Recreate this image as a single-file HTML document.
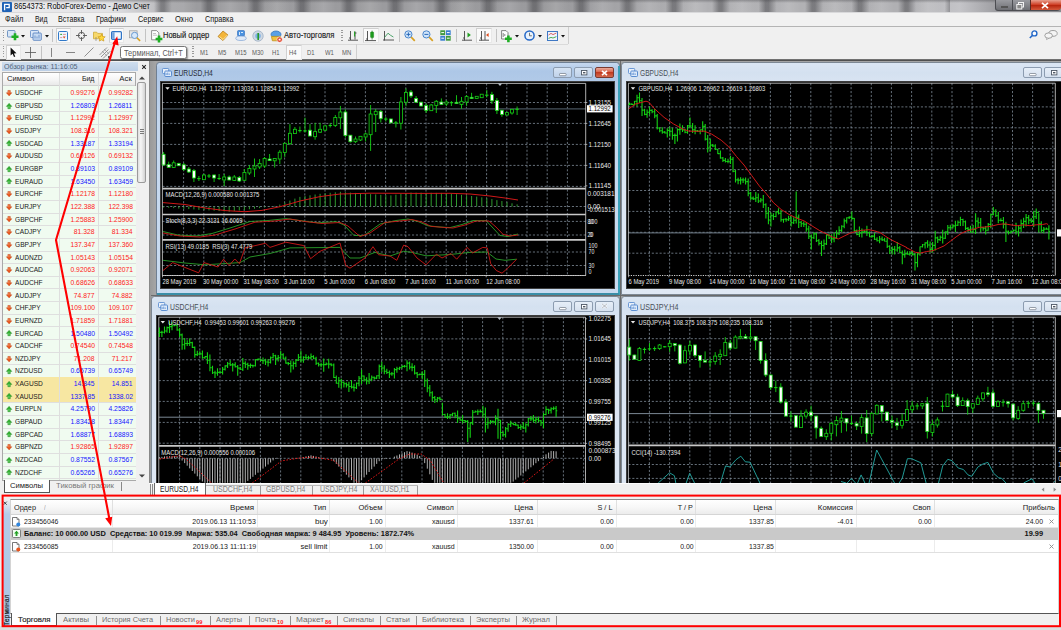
<!DOCTYPE html>
<html lang="ru"><head><meta charset="utf-8"><title>8654373: RoboForex-Demo - Демо Счет</title>
<style>
html,body{margin:0;padding:0;background:#f0f0f0;}
body{width:1061px;height:630px;overflow:hidden;position:relative;font-family:"Liberation Sans",sans-serif;}
#app{position:absolute;left:0;top:0;width:1061px;height:630px;overflow:hidden;}
#app div,.a{position:absolute;}
.t{position:absolute;white-space:pre;display:block;}
svg{overflow:visible;display:block;}
svg text{font-family:"Liberation Sans",sans-serif;}
</style></head>
<body><div id="app">
<div style="left:0.00px;top:0.00px;width:1061.00px;height:13.00px;background:linear-gradient(90deg,#ececee 0,#e2e2e5 110px,#c4c4c7 150px,#9c9c9f 185px,#9a9a9d 560px,#b2b2b5 700px,#b0b0b3 900px,#c4c4c8 960px,#9a9a9e 1000px,#8a8a8e 1061px);"></div>
<div style="left:150.00px;top:0.00px;width:800.00px;height:12.40px;background-image:repeating-linear-gradient(90deg,rgba(70,70,74,0) 0,rgba(70,70,74,0) 4px,rgba(70,70,74,.5) 11px,rgba(70,70,74,.5) 14px,rgba(70,70,74,0) 22px,rgba(255,255,255,.12) 34px,rgba(70,70,74,0) 46.5px);"></div>
<div style="left:0.00px;top:0.00px;width:1061.00px;height:3.00px;background:linear-gradient(rgba(60,60,64,.35),rgba(60,60,64,0));"></div>
<div style="left:0.00px;top:12.20px;width:1061.00px;height:1.00px;background:#d9d9db;"></div>
<svg class="a" style="left:2px;top:1.5px" width="10" height="10" viewBox="0 0 10 10"><rect width="10" height="10" rx="1" fill="#1f62b6"/><path d="M2.6 8.2V2.4h4.6v3.2H4.2" fill="none" stroke="#fff" stroke-width="1.3"/></svg>
<span class="t" style="top:1.10px;font-size:8.6px;line-height:10.6px;color:#0a0a0a;left:13.80px;transform:scaleX(0.866);transform-origin:0 0;">8654373: RoboForex-Demo - Демо Счет</span>
<div style="left:995.00px;top:0.00px;width:65.00px;height:10.50px;background:linear-gradient(#9a9ba0,#6e6f74);border:1px solid #4c4d52;border-top:none;border-radius:0 0 3px 3px;box-sizing:border-box;"></div>
<div style="left:1030.00px;top:0.00px;width:29.50px;height:10.00px;background:linear-gradient(#e8a08f,#d0432a 45%,#b8270f 55%,#d4593c);border-left:1px solid #5a2a22;border-radius:0 0 3px 0;"></div>
<div style="left:1012.00px;top:0.00px;width:1.00px;height:10.00px;background:#4c4d52;"></div>
<div style="left:1000.50px;top:5.60px;width:7.00px;height:2.20px;background:#fff;border:.5px solid #555;box-sizing:border-box;"></div>
<svg class="a" style="left:1016px;top:1.5px" width="9" height="8" viewBox="0 0 9 8"><rect x="2.5" y=".5" width="5" height="4.5" fill="none" stroke="#f2f2f2" stroke-width="1"/><rect x=".8" y="2.5" width="5" height="4.5" fill="#888" stroke="#f2f2f2" stroke-width="1"/></svg>
<svg class="a" style="left:1041px;top:1.5px" width="8" height="7" viewBox="0 0 8 7"><path d="M1 .8l6 5.4M7 .8L1 6.2" stroke="#fff" stroke-width="1.7"/></svg>
<div style="left:0.00px;top:13.20px;width:1061.00px;height:13.00px;background:#f1f1f1;"></div>
<div style="left:0.00px;top:26.20px;width:1061.00px;height:0.90px;background:#b4b4b4;"></div>
<span class="t" style="top:14.40px;font-size:8.6px;line-height:10.6px;color:#141414;left:4.50px;transform:scaleX(0.875);transform-origin:0 0;">Файл</span>
<span class="t" style="top:14.40px;font-size:8.6px;line-height:10.6px;color:#141414;left:34.50px;transform:scaleX(0.803);transform-origin:0 0;">Вид</span>
<span class="t" style="top:14.40px;font-size:8.6px;line-height:10.6px;color:#141414;left:58.00px;transform:scaleX(0.829);transform-origin:0 0;">Вставка</span>
<span class="t" style="top:14.40px;font-size:8.6px;line-height:10.6px;color:#141414;left:96.00px;transform:scaleX(0.878);transform-origin:0 0;">Графики</span>
<span class="t" style="top:14.40px;font-size:8.6px;line-height:10.6px;color:#141414;left:137.50px;transform:scaleX(0.866);transform-origin:0 0;">Сервис</span>
<span class="t" style="top:14.40px;font-size:8.6px;line-height:10.6px;color:#141414;left:174.50px;transform:scaleX(0.901);transform-origin:0 0;">Окно</span>
<span class="t" style="top:14.40px;font-size:8.6px;line-height:10.6px;color:#141414;left:204.50px;transform:scaleX(0.845);transform-origin:0 0;">Справка</span>
<div style="left:0.00px;top:27.00px;width:1061.00px;height:33.00px;background:#f0f0f0;"></div>
<div style="left:0.00px;top:43.60px;width:568.00px;height:0.80px;background:#dadada;"></div>
<div style="left:567.50px;top:27.00px;width:1.00px;height:16.50px;background:#cfcfcf;"></div>
<div style="left:356.00px;top:44.40px;width:1.00px;height:15.50px;background:#cfcfcf;"></div>
<div style="left:0.00px;top:59.40px;width:1061.00px;height:2.30px;background:linear-gradient(#8a8a8a,#4e4e4e 40%,#5a5a5a);"></div>
<div style="left:2.60px;top:29.50px;width:1.60px;height:12.00px;background-image:repeating-linear-gradient(#9a9a9a 0 1px,transparent 1px 2.4px);"></div>
<svg class="a" style="left:7px;top:30px" width="12" height="11" viewBox="0 0 12 11"><rect x=".5" y=".5" width="7.5" height="6.5" rx=".8" fill="#d8e6f6" stroke="#5580b8" stroke-width=".8"/><path d="M8 3.2v7M4.5 6.7h7" stroke="#1fae24" stroke-width="2.6"/></svg>
<svg class="a" style="left:21px;top:35px" width="4" height="3" viewBox="0 0 4 3"><path d="M0 0h4L2 2.6z" fill="#111"/></svg>
<svg class="a" style="left:30px;top:30px" width="12" height="11" viewBox="0 0 12 11"><rect x=".5" y=".5" width="8" height="7" rx=".8" fill="#dbe8f8" stroke="#5b86c4" stroke-width=".8"/><rect x="3" y="3" width="8.3" height="7.3" rx=".8" fill="#c7dbf3" stroke="#4b78ba" stroke-width=".8"/><path d="M5 8.5V5.5M7 8.5V6.5M9 8.5V4.8" stroke="#4b78ba" stroke-width=".7"/></svg>
<svg class="a" style="left:44.5px;top:35px" width="4" height="3" viewBox="0 0 4 3"><path d="M0 0h4L2 2.6z" fill="#111"/></svg>
<div style="left:52.00px;top:29.00px;width:1.00px;height:13.00px;background:#c3c3c3;"></div>
<div style="left:55.50px;top:28.00px;width:15.00px;height:15.00px;background:#fafafa;border:1px solid #d0d0d0;border-right-color:#e8e8e8;border-bottom-color:#e8e8e8;box-sizing:border-box;"></div>
<svg class="a" style="left:58px;top:30.5px" width="10" height="10" viewBox="0 0 10 10"><rect x=".5" y=".5" width="9" height="9" rx="1" fill="#eef5ff" stroke="#2f78c8" stroke-width="1"/><path d="M3 2.4l1.4 1.6H2z" fill="#22a022"/><path d="M6.2 7.6L4.8 5.6h2.8z" fill="#e04a1a"/><path d="M5 3.4h2.8M2.2 6.6h2" stroke="#c55" stroke-width=".6"/></svg>
<svg class="a" style="left:76px;top:30px" width="11" height="11" viewBox="0 0 11 11"><circle cx="5.5" cy="5.5" r="3.2" fill="none" stroke="#555" stroke-width=".9"/><path d="M5.5 0v4M5.5 7v4M0 5.5h4M7 5.5h4" stroke="#555" stroke-width=".9"/></svg>
<svg class="a" style="left:93px;top:29.5px" width="13" height="12" viewBox="0 0 13 12"><path d="M.5 2.2h3.2l1 1.2h4.8v5.4h-9z" fill="#f7d86a" stroke="#c9a227" stroke-width=".7"/><path d="M8.6 4.2l1.1 2.3 2.5.3-1.8 1.8.5 2.5-2.3-1.2-2.3 1.2.5-2.5-1.8-1.8 2.5-.3z" fill="#ffd83a" stroke="#c48f12" stroke-width=".6"/><path d="M3 7v4" stroke="#777" stroke-width=".6"/></svg>
<div style="left:108.50px;top:28.00px;width:15.50px;height:15.00px;background:#fafafa;border:1px solid #d0d0d0;border-right-color:#e8e8e8;border-bottom-color:#e8e8e8;box-sizing:border-box;"></div>
<svg class="a" style="left:111px;top:31px" width="11" height="9" viewBox="0 0 11 9"><rect x=".6" y=".6" width="9.8" height="7.8" rx="1" fill="#f4f8fe" stroke="#2e74c6" stroke-width="1.2"/><rect x="1.2" y="1.2" width="2.4" height="6.6" fill="#6fa0dc"/></svg>
<svg class="a" style="left:129px;top:30px" width="12" height="12" viewBox="0 0 12 12"><rect x=".5" y=".8" width="7.6" height="7" fill="#e8e8e8" stroke="#9a9a9a" stroke-width=".7"/><circle cx="5.6" cy="5.4" r="3.1" fill="#d6e8fb" stroke="#6a9ad0" stroke-width="1"/><path d="M7.9 7.7l3.2 3.2" stroke="#d8a020" stroke-width="1.6"/></svg>
<div style="left:145.00px;top:29.00px;width:1.00px;height:13.00px;background:#c3c3c3;"></div>
<svg class="a" style="left:151px;top:29.5px" width="12" height="13" viewBox="0 0 12 13"><path d="M.6 .6h5l2.2 2.2v7h-7.2z" fill="#fff" stroke="#777" stroke-width=".8"/><path d="M2 3.5h3M2 5.2h4" stroke="#999" stroke-width=".6"/><path d="M8 5.6v6.8M4.6 9h6.8" stroke="#1fae24" stroke-width="2.6"/></svg>
<span class="t" style="top:30.30px;font-size:8.6px;line-height:10.6px;color:#1a1a1a;-webkit-text-stroke:.14px #1a1a1a;left:163.00px;transform:scaleX(0.875);transform-origin:0 0;">Новый ордер</span>
<svg class="a" style="left:217px;top:30px" width="12" height="11" viewBox="0 0 12 11"><path d="M1 6.5L6 1l5 4-5 5.5z" fill="#f3b53a" stroke="#b07610" stroke-width=".7"/><path d="M2.5 6.5l3.5 3 4.5-4.5" fill="none" stroke="#fff0b0" stroke-width=".8"/></svg>
<svg class="a" style="left:235px;top:30px" width="12" height="11" viewBox="0 0 12 11"><rect x="2.5" y=".5" width="7" height="5.5" rx="1" fill="#4a92e0" stroke="#2a68b8" stroke-width=".6"/><ellipse cx="6" cy="8.3" rx="5.3" ry="2.2" fill="#dfeaf8" stroke="#7fa4d4" stroke-width=".7"/><path d="M4.5 2v3M6 2.5h2" stroke="#fff" stroke-width=".8"/></svg>
<svg class="a" style="left:252px;top:30px" width="12" height="12" viewBox="0 0 12 12"><circle cx="6" cy="6" r="5.2" fill="#cfd8e2" stroke="#9eb0c4" stroke-width=".8"/><circle cx="6" cy="6" r="2.8" fill="#7fb2e6"/><path d="M6.2 3v7" stroke="#2a9a2a" stroke-width="1.6"/></svg>
<svg class="a" style="left:270px;top:29.5px" width="13" height="13" viewBox="0 0 13 13"><ellipse cx="6" cy="4.4" rx="5" ry="3.4" fill="#5aa0e6" stroke="#2b6cb4" stroke-width=".7"/><path d="M1.4 6.4h9.2l-1 4.4H2.4z" fill="#f2c23e" stroke="#b8860f" stroke-width=".7"/><circle cx="9.6" cy="9.6" r="2.7" fill="#e03a1e" stroke="#fff" stroke-width=".6"/><rect x="8.6" y="8.7" width="2" height="1.8" fill="#fff"/></svg>
<span class="t" style="top:30.30px;font-size:8.6px;line-height:10.6px;color:#1a1a1a;-webkit-text-stroke:.14px #1a1a1a;left:283.70px;transform:scaleX(0.889);transform-origin:0 0;">Авто-торговля</span>
<div style="left:341.00px;top:29.50px;width:1.60px;height:12.00px;background-image:repeating-linear-gradient(#9a9a9a 0 1px,transparent 1px 2.4px);"></div>
<svg class="a" style="left:348px;top:30px" width="10" height="11" viewBox="0 0 10 11"><path d="M2.5 1v9M1 8h1.5M7 1.5v8M7 3h1.5M0 10.2h10" stroke="#444" stroke-width=".9" fill="none"/><path d="M6.6 1.5v5" stroke="#22a022" stroke-width="1.1"/></svg>
<div style="left:362.50px;top:28.00px;width:16.00px;height:15.00px;background:#fafafa;border:1px solid #d0d0d0;border-right-color:#e8e8e8;border-bottom-color:#e8e8e8;box-sizing:border-box;"></div>
<svg class="a" style="left:365px;top:29.5px" width="11" height="12" viewBox="0 0 11 12"><path d="M2.5 1v10M1 9h1.5M0 10.6h11" stroke="#444" stroke-width=".9" fill="none"/><rect x="5.6" y="2" width="3" height="5.6" rx=".6" fill="#22b022" stroke="#157a15" stroke-width=".5"/><path d="M7.1 .6v9" stroke="#157a15" stroke-width=".7"/></svg>
<svg class="a" style="left:383px;top:30px" width="11" height="11" viewBox="0 0 11 11"><path d="M1.5 1v9.5M0 10h11" stroke="#444" stroke-width=".9" fill="none"/><path d="M1.5 7.5L5 3.2l2.4 2L10.4 7" stroke="#3a9a5a" stroke-width=".9" fill="none"/></svg>
<div style="left:399.00px;top:29.00px;width:1.00px;height:13.00px;background:#c3c3c3;"></div>
<svg class="a" style="left:404px;top:30px" width="12" height="12" viewBox="0 0 12 12"><circle cx="4.4" cy="4.4" r="3.6" fill="#cfe4fa" stroke="#4a86cc" stroke-width="1"/><path d="M2.4 4.4h4M4.4 2.4v4" stroke="#2a6ab8" stroke-width="1"/><path d="M7.2 7.2l3.6 3.6" stroke="#d8a020" stroke-width="1.7"/></svg>
<svg class="a" style="left:422px;top:30px" width="12" height="12" viewBox="0 0 12 12"><circle cx="4.4" cy="4.4" r="3.6" fill="#cfe4fa" stroke="#4a86cc" stroke-width="1"/><path d="M2.4 4.4h4" stroke="#2a6ab8" stroke-width="1"/><path d="M7.2 7.2l3.6 3.6" stroke="#d8a020" stroke-width="1.7"/></svg>
<svg class="a" style="left:440px;top:30px" width="11" height="11" viewBox="0 0 11 11"><rect x=".3" y=".3" width="4.8" height="4.8" fill="#3f9a3f"/><rect x="5.9" y=".3" width="4.8" height="4.8" fill="#3a7fd0"/><rect x=".3" y="5.9" width="4.8" height="4.8" fill="#3a7fd0"/><rect x="5.9" y="5.9" width="4.8" height="4.8" fill="#3f9a3f"/><path d="M1.3 2.6h2.8M6.9 2.6h2.8M1.3 8.2h2.8M6.9 8.2h2.8" stroke="#fff" stroke-width="1"/></svg>
<div style="left:456.00px;top:29.00px;width:1.00px;height:13.00px;background:#c3c3c3;"></div>
<svg class="a" style="left:462px;top:30px" width="11" height="11" viewBox="0 0 11 11"><path d="M2.5 1v9.5M1 8h1.5M0 10.2h10" stroke="#444" stroke-width=".9" fill="none"/><path d="M5.5 2.6l3.4 2.5-3.4 2.5z" fill="#22a022"/></svg>
<div style="left:476.00px;top:28.00px;width:16.00px;height:15.00px;background:#fafafa;border:1px solid #d0d0d0;border-right-color:#e8e8e8;border-bottom-color:#e8e8e8;box-sizing:border-box;"></div>
<svg class="a" style="left:479px;top:30px" width="11" height="11" viewBox="0 0 11 11"><path d="M2.5 1v9.5M1 8h1.5M0 10.2h10M6 1v9" stroke="#444" stroke-width=".9" fill="none"/><path d="M9.6 3l-2.6 2 2.6 2z" fill="#e04a1a"/></svg>
<div style="left:495.50px;top:29.00px;width:1.00px;height:13.00px;background:#c3c3c3;"></div>
<svg class="a" style="left:501px;top:29.5px" width="12" height="13" viewBox="0 0 12 13"><path d="M.6 .6h4.4l2 2v6.4h-6.4z" fill="#fff" stroke="#666" stroke-width=".8"/><path d="M2.2 3v4M3.8 4v2" stroke="#555" stroke-width=".7"/><path d="M7.4 5.4v6.8M4 8.8h6.8" stroke="#1fae24" stroke-width="2.6"/></svg>
<svg class="a" style="left:514.5px;top:35px" width="4" height="3" viewBox="0 0 4 3"><path d="M0 0h4L2 2.6z" fill="#111"/></svg>
<svg class="a" style="left:523.5px;top:30px" width="11" height="11" viewBox="0 0 11 11"><circle cx="5.5" cy="5.5" r="4.6" fill="#eaf3fd" stroke="#2468c8" stroke-width="1.5"/><path d="M5.5 2.8v3h2.4" stroke="#555" stroke-width=".8" fill="none"/></svg>
<svg class="a" style="left:537.5px;top:35px" width="4" height="3" viewBox="0 0 4 3"><path d="M0 0h4L2 2.6z" fill="#111"/></svg>
<svg class="a" style="left:546.5px;top:30.5px" width="11" height="10" viewBox="0 0 11 10"><rect x=".5" y=".5" width="10" height="9" fill="#eef4fc" stroke="#3f78c4" stroke-width="1"/><path d="M1.5 4l2.5-1.6 2 1.2 3.4-1.6" stroke="#d04040" stroke-width=".8" fill="none"/><path d="M1.5 7.4l2.5-1 2 .6 3.4-1.4" stroke="#2a9a2a" stroke-width=".8" fill="none"/></svg>
<svg class="a" style="left:560.5px;top:35px" width="4" height="3" viewBox="0 0 4 3"><path d="M0 0h4L2 2.6z" fill="#111"/></svg>
<svg class="a" style="left:1029px;top:30px" width="9" height="9" viewBox="0 0 9 9"><circle cx="5.4" cy="3.4" r="2.5" fill="#fff" stroke="#2468c8" stroke-width="1.4"/><path d="M3.6 5.2L.8 8" stroke="#2468c8" stroke-width="1.6"/></svg>
<svg class="a" style="left:1044px;top:30px" width="14" height="10" viewBox="0 0 14 10"><ellipse cx="9" cy="3.4" rx="4.2" ry="2.9" fill="#f4f4f4" stroke="#8a8a8a" stroke-width=".8"/><ellipse cx="4.6" cy="5.6" rx="3.8" ry="2.7" fill="#f4f4f4" stroke="#8a8a8a" stroke-width=".8"/><path d="M3 8l-.5 1.6L5 8.2" fill="#f4f4f4" stroke="#8a8a8a" stroke-width=".6"/></svg>
<div style="left:2.60px;top:46.00px;width:1.60px;height:12.00px;background-image:repeating-linear-gradient(#9a9a9a 0 1px,transparent 1px 2.4px);"></div>
<div style="left:5.50px;top:44.80px;width:15.00px;height:15.00px;background:#fafafa;border:1px solid #d0d0d0;border-right-color:#e8e8e8;border-bottom-color:#e8e8e8;box-sizing:border-box;"></div>
<svg class="a" style="left:9.5px;top:47px" width="7" height="11" viewBox="0 0 7 11"><path d="M.6 .6v8l2-1.8 1.4 3.2 1.3-.6-1.4-3 2.6-.2z" fill="#111"/></svg>
<svg class="a" style="left:25px;top:47px" width="11" height="11" viewBox="0 0 11 11"><path d="M5.5 0v11M0 5.5h11" stroke="#555" stroke-width=".8"/></svg>
<div style="left:40.50px;top:46.00px;width:1.00px;height:13.00px;background:#c3c3c3;"></div>
<div style="left:51.00px;top:48.00px;width:1.00px;height:9.00px;background:#858585;"></div>
<div style="left:66.00px;top:52.30px;width:9.00px;height:1.00px;background:#858585;"></div>
<svg class="a" style="left:84px;top:47px" width="10" height="10" viewBox="0 0 10 10"><path d="M.5 9.5L9.5 .5" stroke="#858585" stroke-width=".9"/></svg>
<svg class="a" style="left:99px;top:46.5px" width="12" height="12" viewBox="0 0 12 12"><path d="M.5 8L8 .5M2 10L9.5 2.5M4 11.5L11.5 4" stroke="#808080" stroke-width=".8"/><path d="M3 4l5 5M5 2l5 5" stroke="#888" stroke-width=".6"/><rect x="9" y="9" width="2.5" height="2.5" fill="#555"/></svg>
<div style="left:119.50px;top:46.00px;width:67.50px;height:13.40px;background:#fff;border:1px solid #767676;border-radius:2.5px;box-sizing:border-box;box-shadow:1px 1px 1.5px rgba(0,0,0,.35);"></div>
<span class="t" style="top:47.50px;font-size:8.4px;line-height:10.4px;color:#5a5a5a;left:124.00px;transform:scaleX(0.888);transform-origin:0 0;">Терминал, Ctrl+T</span>
<div style="left:192.00px;top:46.00px;width:1.60px;height:12.00px;background-image:repeating-linear-gradient(#9a9a9a 0 1px,transparent 1px 2.4px);"></div>
<div style="left:285.50px;top:44.80px;width:16.00px;height:15.00px;background:#fafafa;border:1px solid #d0d0d0;border-right-color:#e8e8e8;border-bottom-color:#e8e8e8;box-sizing:border-box;"></div>
<span class="t" style="top:48.90px;font-size:6.6px;line-height:8.6px;color:#5a5a5a;left:200.00px;transform:scaleX(0.900);transform-origin:0 0;">M1</span>
<span class="t" style="top:48.90px;font-size:6.6px;line-height:8.6px;color:#5a5a5a;left:217.50px;transform:scaleX(0.900);transform-origin:0 0;">M5</span>
<span class="t" style="top:48.90px;font-size:6.6px;line-height:8.6px;color:#5a5a5a;left:234.50px;transform:scaleX(0.900);transform-origin:0 0;">M15</span>
<span class="t" style="top:48.90px;font-size:6.6px;line-height:8.6px;color:#5a5a5a;left:252.00px;transform:scaleX(0.900);transform-origin:0 0;">M30</span>
<span class="t" style="top:48.90px;font-size:6.6px;line-height:8.6px;color:#5a5a5a;left:271.50px;transform:scaleX(0.900);transform-origin:0 0;">H1</span>
<span class="t" style="top:48.90px;font-size:6.6px;line-height:8.6px;color:#5a5a5a;left:289.00px;transform:scaleX(0.900);transform-origin:0 0;">H4</span>
<span class="t" style="top:48.90px;font-size:6.6px;line-height:8.6px;color:#5a5a5a;left:307.00px;transform:scaleX(0.900);transform-origin:0 0;">D1</span>
<span class="t" style="top:48.90px;font-size:6.6px;line-height:8.6px;color:#5a5a5a;left:324.50px;transform:scaleX(0.900);transform-origin:0 0;">W1</span>
<span class="t" style="top:48.90px;font-size:6.6px;line-height:8.6px;color:#5a5a5a;left:341.50px;transform:scaleX(0.900);transform-origin:0 0;">MN</span>
<div style="left:0.00px;top:61.00px;width:149.00px;height:434.00px;background:#f0f0f0;"></div>
<div style="left:2.00px;top:62.00px;width:136.00px;height:9.00px;background:linear-gradient(#cfdeee,#bccfe6);"></div>
<span class="t" style="top:61.60px;font-size:8px;line-height:10px;color:#4e5f78;left:3.50px;transform:scaleX(0.885);transform-origin:0 0;">Обзор рынка: 11:16:05</span>
<svg class="a" style="left:140.5px;top:63.5px" width="6" height="6" viewBox="0 0 6 6"><path d="M1.2 1.2l3.6 3.6M4.8 1.2l-3.6 3.6" stroke="#222" stroke-width="1.05"/></svg>
<div style="left:2.00px;top:72.00px;width:134.00px;height:409.00px;background:#fff;border:1px solid #a9a9a9;box-sizing:border-box;"></div>
<div style="left:3.00px;top:73.00px;width:132.00px;height:12.50px;background:linear-gradient(#fff,#f4f4f4 60%,#e9e9e9);border-bottom:1px solid #d0d0d0;box-sizing:border-box;"></div>
<span class="t" style="top:74.20px;font-size:8px;line-height:10px;color:#1a1a1a;left:6.50px;transform:scaleX(0.953);transform-origin:0 0;">Символ</span>
<span class="t" style="top:74.20px;font-size:8px;line-height:10px;color:#1a1a1a;left:79.61px;width:14.39px;transform:scaleX(0.869);transform-origin:100% 0;">Бид</span>
<span class="t" style="top:74.20px;font-size:8px;line-height:10px;color:#1a1a1a;left:119.46px;width:12.84px;transform:scaleX(0.974);transform-origin:100% 0;">Аск</span>
<div style="left:3.00px;top:85.50px;width:132.50px;height:394.50px;background:#f0fbf0;"></div>
<div style="left:3.00px;top:98.70px;width:132.50px;height:1.00px;background:#dfdfdf;"></div>
<svg class="a" style="left:5.6px;top:89.87500000000001px" width="6.2" height="6.2" viewBox="0 0 8 8"><path d="M2.4 0.6h3.2v3h2L4 7.6 0.4 3.6h2z" fill="#e8541c" stroke="#b83c10" stroke-width=".5"/><path d="M3.2 1.2h1.2v3h-1.2z" fill="#ffb080" opacity=".8"/></svg>
<span class="t" style="top:88.18px;font-size:8px;line-height:10px;color:#1a1a1a;left:15.40px;transform:scaleX(0.825);transform-origin:0 0;">USDCHF</span>
<span class="t" style="top:88.18px;font-size:8px;line-height:10px;color:#ff2020;left:65.69px;width:28.91px;transform:scaleX(0.845);transform-origin:100% 0;">0.99276</span>
<span class="t" style="top:88.18px;font-size:8px;line-height:10px;color:#ff2020;left:103.69px;width:28.91px;transform:scaleX(0.845);transform-origin:100% 0;">0.99282</span>
<div style="left:3.00px;top:111.35px;width:132.50px;height:1.00px;background:#dfdfdf;"></div>
<svg class="a" style="left:5.6px;top:102.52500000000002px" width="6.2" height="6.2" viewBox="0 0 8 8"><path d="M2.4 7.4h3.2v-3h2L4 0.4 0.4 4.4h2z" fill="#2fae2f" stroke="#1c861c" stroke-width=".5"/><path d="M3.2 6.8h1.2v-3h-1.2z" fill="#a0f0a0" opacity=".7"/></svg>
<span class="t" style="top:100.83px;font-size:8px;line-height:10px;color:#1a1a1a;left:15.40px;transform:scaleX(0.825);transform-origin:0 0;">GBPUSD</span>
<span class="t" style="top:100.83px;font-size:8px;line-height:10px;color:#1414ff;left:65.69px;width:28.91px;transform:scaleX(0.845);transform-origin:100% 0;">1.26803</span>
<span class="t" style="top:100.83px;font-size:8px;line-height:10px;color:#1414ff;left:104.28px;width:28.32px;transform:scaleX(0.845);transform-origin:100% 0;">1.26811</span>
<div style="left:3.00px;top:124.00px;width:132.50px;height:1.00px;background:#dfdfdf;"></div>
<svg class="a" style="left:5.6px;top:115.17500000000001px" width="6.2" height="6.2" viewBox="0 0 8 8"><path d="M2.4 0.6h3.2v3h2L4 7.6 0.4 3.6h2z" fill="#e8541c" stroke="#b83c10" stroke-width=".5"/><path d="M3.2 1.2h1.2v3h-1.2z" fill="#ffb080" opacity=".8"/></svg>
<span class="t" style="top:113.48px;font-size:8px;line-height:10px;color:#1a1a1a;left:15.40px;transform:scaleX(0.825);transform-origin:0 0;">EURUSD</span>
<span class="t" style="top:113.48px;font-size:8px;line-height:10px;color:#ff2020;left:65.69px;width:28.91px;transform:scaleX(0.845);transform-origin:100% 0;">1.12992</span>
<span class="t" style="top:113.48px;font-size:8px;line-height:10px;color:#ff2020;left:103.69px;width:28.91px;transform:scaleX(0.845);transform-origin:100% 0;">1.12997</span>
<div style="left:3.00px;top:136.65px;width:132.50px;height:1.00px;background:#dfdfdf;"></div>
<svg class="a" style="left:5.6px;top:127.825px" width="6.2" height="6.2" viewBox="0 0 8 8"><path d="M2.4 0.6h3.2v3h2L4 7.6 0.4 3.6h2z" fill="#e8541c" stroke="#b83c10" stroke-width=".5"/><path d="M3.2 1.2h1.2v3h-1.2z" fill="#ffb080" opacity=".8"/></svg>
<span class="t" style="top:126.12px;font-size:8px;line-height:10px;color:#1a1a1a;left:15.40px;transform:scaleX(0.825);transform-origin:0 0;">USDJPY</span>
<span class="t" style="top:126.12px;font-size:8px;line-height:10px;color:#ff2020;left:65.69px;width:28.91px;transform:scaleX(0.845);transform-origin:100% 0;">108.316</span>
<span class="t" style="top:126.12px;font-size:8px;line-height:10px;color:#ff2020;left:103.69px;width:28.91px;transform:scaleX(0.845);transform-origin:100% 0;">108.321</span>
<div style="left:3.00px;top:149.30px;width:132.50px;height:1.00px;background:#dfdfdf;"></div>
<svg class="a" style="left:5.6px;top:140.47499999999997px" width="6.2" height="6.2" viewBox="0 0 8 8"><path d="M2.4 7.4h3.2v-3h2L4 0.4 0.4 4.4h2z" fill="#2fae2f" stroke="#1c861c" stroke-width=".5"/><path d="M3.2 6.8h1.2v-3h-1.2z" fill="#a0f0a0" opacity=".7"/></svg>
<span class="t" style="top:138.77px;font-size:8px;line-height:10px;color:#1a1a1a;left:15.40px;transform:scaleX(0.825);transform-origin:0 0;">USDCAD</span>
<span class="t" style="top:138.77px;font-size:8px;line-height:10px;color:#1414ff;left:65.69px;width:28.91px;transform:scaleX(0.845);transform-origin:100% 0;">1.33187</span>
<span class="t" style="top:138.77px;font-size:8px;line-height:10px;color:#1414ff;left:103.69px;width:28.91px;transform:scaleX(0.845);transform-origin:100% 0;">1.33194</span>
<div style="left:3.00px;top:161.95px;width:132.50px;height:1.00px;background:#dfdfdf;"></div>
<svg class="a" style="left:5.6px;top:153.12499999999997px" width="6.2" height="6.2" viewBox="0 0 8 8"><path d="M2.4 0.6h3.2v3h2L4 7.6 0.4 3.6h2z" fill="#e8541c" stroke="#b83c10" stroke-width=".5"/><path d="M3.2 1.2h1.2v3h-1.2z" fill="#ffb080" opacity=".8"/></svg>
<span class="t" style="top:151.42px;font-size:8px;line-height:10px;color:#1a1a1a;left:15.40px;transform:scaleX(0.825);transform-origin:0 0;">AUDUSD</span>
<span class="t" style="top:151.42px;font-size:8px;line-height:10px;color:#ff2020;left:65.69px;width:28.91px;transform:scaleX(0.845);transform-origin:100% 0;">0.69126</span>
<span class="t" style="top:151.42px;font-size:8px;line-height:10px;color:#ff2020;left:103.69px;width:28.91px;transform:scaleX(0.845);transform-origin:100% 0;">0.69132</span>
<div style="left:3.00px;top:174.60px;width:132.50px;height:1.00px;background:#dfdfdf;"></div>
<svg class="a" style="left:5.6px;top:165.77499999999998px" width="6.2" height="6.2" viewBox="0 0 8 8"><path d="M2.4 7.4h3.2v-3h2L4 0.4 0.4 4.4h2z" fill="#2fae2f" stroke="#1c861c" stroke-width=".5"/><path d="M3.2 6.8h1.2v-3h-1.2z" fill="#a0f0a0" opacity=".7"/></svg>
<span class="t" style="top:164.07px;font-size:8px;line-height:10px;color:#1a1a1a;left:15.40px;transform:scaleX(0.825);transform-origin:0 0;">EURGBP</span>
<span class="t" style="top:164.07px;font-size:8px;line-height:10px;color:#1414ff;left:65.69px;width:28.91px;transform:scaleX(0.845);transform-origin:100% 0;">0.89103</span>
<span class="t" style="top:164.07px;font-size:8px;line-height:10px;color:#1414ff;left:103.69px;width:28.91px;transform:scaleX(0.845);transform-origin:100% 0;">0.89109</span>
<div style="left:3.00px;top:187.25px;width:132.50px;height:1.00px;background:#dfdfdf;"></div>
<svg class="a" style="left:5.6px;top:178.42499999999995px" width="6.2" height="6.2" viewBox="0 0 8 8"><path d="M2.4 7.4h3.2v-3h2L4 0.4 0.4 4.4h2z" fill="#2fae2f" stroke="#1c861c" stroke-width=".5"/><path d="M3.2 6.8h1.2v-3h-1.2z" fill="#a0f0a0" opacity=".7"/></svg>
<span class="t" style="top:176.72px;font-size:8px;line-height:10px;color:#1a1a1a;left:15.40px;transform:scaleX(0.825);transform-origin:0 0;">EURAUD</span>
<span class="t" style="top:176.72px;font-size:8px;line-height:10px;color:#1414ff;left:65.69px;width:28.91px;transform:scaleX(0.845);transform-origin:100% 0;">1.63450</span>
<span class="t" style="top:176.72px;font-size:8px;line-height:10px;color:#1414ff;left:103.69px;width:28.91px;transform:scaleX(0.845);transform-origin:100% 0;">1.63459</span>
<div style="left:3.00px;top:199.90px;width:132.50px;height:1.00px;background:#dfdfdf;"></div>
<svg class="a" style="left:5.6px;top:191.075px" width="6.2" height="6.2" viewBox="0 0 8 8"><path d="M2.4 0.6h3.2v3h2L4 7.6 0.4 3.6h2z" fill="#e8541c" stroke="#b83c10" stroke-width=".5"/><path d="M3.2 1.2h1.2v3h-1.2z" fill="#ffb080" opacity=".8"/></svg>
<span class="t" style="top:189.38px;font-size:8px;line-height:10px;color:#1a1a1a;left:15.40px;transform:scaleX(0.825);transform-origin:0 0;">EURCHF</span>
<span class="t" style="top:189.38px;font-size:8px;line-height:10px;color:#ff2020;left:65.69px;width:28.91px;transform:scaleX(0.845);transform-origin:100% 0;">1.12178</span>
<span class="t" style="top:189.38px;font-size:8px;line-height:10px;color:#ff2020;left:103.69px;width:28.91px;transform:scaleX(0.845);transform-origin:100% 0;">1.12180</span>
<div style="left:3.00px;top:212.55px;width:132.50px;height:1.00px;background:#dfdfdf;"></div>
<svg class="a" style="left:5.6px;top:203.72499999999997px" width="6.2" height="6.2" viewBox="0 0 8 8"><path d="M2.4 0.6h3.2v3h2L4 7.6 0.4 3.6h2z" fill="#e8541c" stroke="#b83c10" stroke-width=".5"/><path d="M3.2 1.2h1.2v3h-1.2z" fill="#ffb080" opacity=".8"/></svg>
<span class="t" style="top:202.02px;font-size:8px;line-height:10px;color:#1a1a1a;left:15.40px;transform:scaleX(0.825);transform-origin:0 0;">EURJPY</span>
<span class="t" style="top:202.02px;font-size:8px;line-height:10px;color:#ff2020;left:65.69px;width:28.91px;transform:scaleX(0.845);transform-origin:100% 0;">122.388</span>
<span class="t" style="top:202.02px;font-size:8px;line-height:10px;color:#ff2020;left:103.69px;width:28.91px;transform:scaleX(0.845);transform-origin:100% 0;">122.398</span>
<div style="left:3.00px;top:225.20px;width:132.50px;height:1.00px;background:#dfdfdf;"></div>
<svg class="a" style="left:5.6px;top:216.37499999999997px" width="6.2" height="6.2" viewBox="0 0 8 8"><path d="M2.4 0.6h3.2v3h2L4 7.6 0.4 3.6h2z" fill="#e8541c" stroke="#b83c10" stroke-width=".5"/><path d="M3.2 1.2h1.2v3h-1.2z" fill="#ffb080" opacity=".8"/></svg>
<span class="t" style="top:214.67px;font-size:8px;line-height:10px;color:#1a1a1a;left:15.40px;transform:scaleX(0.825);transform-origin:0 0;">GBPCHF</span>
<span class="t" style="top:214.67px;font-size:8px;line-height:10px;color:#ff2020;left:65.69px;width:28.91px;transform:scaleX(0.845);transform-origin:100% 0;">1.25883</span>
<span class="t" style="top:214.67px;font-size:8px;line-height:10px;color:#ff2020;left:103.69px;width:28.91px;transform:scaleX(0.845);transform-origin:100% 0;">1.25900</span>
<div style="left:3.00px;top:237.85px;width:132.50px;height:1.00px;background:#dfdfdf;"></div>
<svg class="a" style="left:5.6px;top:229.02499999999998px" width="6.2" height="6.2" viewBox="0 0 8 8"><path d="M2.4 0.6h3.2v3h2L4 7.6 0.4 3.6h2z" fill="#e8541c" stroke="#b83c10" stroke-width=".5"/><path d="M3.2 1.2h1.2v3h-1.2z" fill="#ffb080" opacity=".8"/></svg>
<span class="t" style="top:227.32px;font-size:8px;line-height:10px;color:#1a1a1a;left:15.40px;transform:scaleX(0.825);transform-origin:0 0;">CADJPY</span>
<span class="t" style="top:227.32px;font-size:8px;line-height:10px;color:#ff2020;left:70.13px;width:24.47px;transform:scaleX(0.845);transform-origin:100% 0;">81.328</span>
<span class="t" style="top:227.32px;font-size:8px;line-height:10px;color:#ff2020;left:108.13px;width:24.47px;transform:scaleX(0.845);transform-origin:100% 0;">81.334</span>
<div style="left:3.00px;top:250.50px;width:132.50px;height:1.00px;background:#dfdfdf;"></div>
<svg class="a" style="left:5.6px;top:241.67499999999998px" width="6.2" height="6.2" viewBox="0 0 8 8"><path d="M2.4 0.6h3.2v3h2L4 7.6 0.4 3.6h2z" fill="#e8541c" stroke="#b83c10" stroke-width=".5"/><path d="M3.2 1.2h1.2v3h-1.2z" fill="#ffb080" opacity=".8"/></svg>
<span class="t" style="top:239.97px;font-size:8px;line-height:10px;color:#1a1a1a;left:15.40px;transform:scaleX(0.825);transform-origin:0 0;">GBPJPY</span>
<span class="t" style="top:239.97px;font-size:8px;line-height:10px;color:#ff2020;left:65.69px;width:28.91px;transform:scaleX(0.845);transform-origin:100% 0;">137.347</span>
<span class="t" style="top:239.97px;font-size:8px;line-height:10px;color:#ff2020;left:103.69px;width:28.91px;transform:scaleX(0.845);transform-origin:100% 0;">137.360</span>
<div style="left:3.00px;top:263.15px;width:132.50px;height:1.00px;background:#dfdfdf;"></div>
<svg class="a" style="left:5.6px;top:254.325px" width="6.2" height="6.2" viewBox="0 0 8 8"><path d="M2.4 0.6h3.2v3h2L4 7.6 0.4 3.6h2z" fill="#e8541c" stroke="#b83c10" stroke-width=".5"/><path d="M3.2 1.2h1.2v3h-1.2z" fill="#ffb080" opacity=".8"/></svg>
<span class="t" style="top:252.62px;font-size:8px;line-height:10px;color:#1a1a1a;left:15.40px;transform:scaleX(0.825);transform-origin:0 0;">AUDNZD</span>
<span class="t" style="top:252.62px;font-size:8px;line-height:10px;color:#ff2020;left:65.69px;width:28.91px;transform:scaleX(0.845);transform-origin:100% 0;">1.05143</span>
<span class="t" style="top:252.62px;font-size:8px;line-height:10px;color:#ff2020;left:103.69px;width:28.91px;transform:scaleX(0.845);transform-origin:100% 0;">1.05154</span>
<div style="left:3.00px;top:275.80px;width:132.50px;height:1.00px;background:#dfdfdf;"></div>
<svg class="a" style="left:5.6px;top:266.97499999999997px" width="6.2" height="6.2" viewBox="0 0 8 8"><path d="M2.4 0.6h3.2v3h2L4 7.6 0.4 3.6h2z" fill="#e8541c" stroke="#b83c10" stroke-width=".5"/><path d="M3.2 1.2h1.2v3h-1.2z" fill="#ffb080" opacity=".8"/></svg>
<span class="t" style="top:265.27px;font-size:8px;line-height:10px;color:#1a1a1a;left:15.40px;transform:scaleX(0.825);transform-origin:0 0;">AUDCAD</span>
<span class="t" style="top:265.27px;font-size:8px;line-height:10px;color:#ff2020;left:65.69px;width:28.91px;transform:scaleX(0.845);transform-origin:100% 0;">0.92063</span>
<span class="t" style="top:265.27px;font-size:8px;line-height:10px;color:#ff2020;left:103.69px;width:28.91px;transform:scaleX(0.845);transform-origin:100% 0;">0.92071</span>
<div style="left:3.00px;top:288.45px;width:132.50px;height:1.00px;background:#dfdfdf;"></div>
<svg class="a" style="left:5.6px;top:279.62499999999994px" width="6.2" height="6.2" viewBox="0 0 8 8"><path d="M2.4 0.6h3.2v3h2L4 7.6 0.4 3.6h2z" fill="#e8541c" stroke="#b83c10" stroke-width=".5"/><path d="M3.2 1.2h1.2v3h-1.2z" fill="#ffb080" opacity=".8"/></svg>
<span class="t" style="top:277.92px;font-size:8px;line-height:10px;color:#1a1a1a;left:15.40px;transform:scaleX(0.825);transform-origin:0 0;">AUDCHF</span>
<span class="t" style="top:277.92px;font-size:8px;line-height:10px;color:#ff2020;left:65.69px;width:28.91px;transform:scaleX(0.845);transform-origin:100% 0;">0.68626</span>
<span class="t" style="top:277.92px;font-size:8px;line-height:10px;color:#ff2020;left:103.69px;width:28.91px;transform:scaleX(0.845);transform-origin:100% 0;">0.68633</span>
<div style="left:3.00px;top:301.10px;width:132.50px;height:1.00px;background:#dfdfdf;"></div>
<svg class="a" style="left:5.6px;top:292.275px" width="6.2" height="6.2" viewBox="0 0 8 8"><path d="M2.4 0.6h3.2v3h2L4 7.6 0.4 3.6h2z" fill="#e8541c" stroke="#b83c10" stroke-width=".5"/><path d="M3.2 1.2h1.2v3h-1.2z" fill="#ffb080" opacity=".8"/></svg>
<span class="t" style="top:290.57px;font-size:8px;line-height:10px;color:#1a1a1a;left:15.40px;transform:scaleX(0.825);transform-origin:0 0;">AUDJPY</span>
<span class="t" style="top:290.57px;font-size:8px;line-height:10px;color:#ff2020;left:70.13px;width:24.47px;transform:scaleX(0.845);transform-origin:100% 0;">74.877</span>
<span class="t" style="top:290.57px;font-size:8px;line-height:10px;color:#ff2020;left:108.13px;width:24.47px;transform:scaleX(0.845);transform-origin:100% 0;">74.882</span>
<div style="left:3.00px;top:313.75px;width:132.50px;height:1.00px;background:#dfdfdf;"></div>
<svg class="a" style="left:5.6px;top:304.925px" width="6.2" height="6.2" viewBox="0 0 8 8"><path d="M2.4 0.6h3.2v3h2L4 7.6 0.4 3.6h2z" fill="#e8541c" stroke="#b83c10" stroke-width=".5"/><path d="M3.2 1.2h1.2v3h-1.2z" fill="#ffb080" opacity=".8"/></svg>
<span class="t" style="top:303.23px;font-size:8px;line-height:10px;color:#1a1a1a;left:15.40px;transform:scaleX(0.825);transform-origin:0 0;">CHFJPY</span>
<span class="t" style="top:303.23px;font-size:8px;line-height:10px;color:#ff2020;left:65.69px;width:28.91px;transform:scaleX(0.845);transform-origin:100% 0;">109.100</span>
<span class="t" style="top:303.23px;font-size:8px;line-height:10px;color:#ff2020;left:103.69px;width:28.91px;transform:scaleX(0.845);transform-origin:100% 0;">109.107</span>
<div style="left:3.00px;top:326.40px;width:132.50px;height:1.00px;background:#dfdfdf;"></div>
<svg class="a" style="left:5.6px;top:317.575px" width="6.2" height="6.2" viewBox="0 0 8 8"><path d="M2.4 0.6h3.2v3h2L4 7.6 0.4 3.6h2z" fill="#e8541c" stroke="#b83c10" stroke-width=".5"/><path d="M3.2 1.2h1.2v3h-1.2z" fill="#ffb080" opacity=".8"/></svg>
<span class="t" style="top:315.88px;font-size:8px;line-height:10px;color:#1a1a1a;left:15.40px;transform:scaleX(0.825);transform-origin:0 0;">EURNZD</span>
<span class="t" style="top:315.88px;font-size:8px;line-height:10px;color:#ff2020;left:65.69px;width:28.91px;transform:scaleX(0.845);transform-origin:100% 0;">1.71859</span>
<span class="t" style="top:315.88px;font-size:8px;line-height:10px;color:#ff2020;left:103.69px;width:28.91px;transform:scaleX(0.845);transform-origin:100% 0;">1.71881</span>
<div style="left:3.00px;top:339.05px;width:132.50px;height:1.00px;background:#dfdfdf;"></div>
<svg class="a" style="left:5.6px;top:330.22499999999997px" width="6.2" height="6.2" viewBox="0 0 8 8"><path d="M2.4 7.4h3.2v-3h2L4 0.4 0.4 4.4h2z" fill="#2fae2f" stroke="#1c861c" stroke-width=".5"/><path d="M3.2 6.8h1.2v-3h-1.2z" fill="#a0f0a0" opacity=".7"/></svg>
<span class="t" style="top:328.52px;font-size:8px;line-height:10px;color:#1a1a1a;left:15.40px;transform:scaleX(0.825);transform-origin:0 0;">EURCAD</span>
<span class="t" style="top:328.52px;font-size:8px;line-height:10px;color:#1414ff;left:65.69px;width:28.91px;transform:scaleX(0.845);transform-origin:100% 0;">1.50480</span>
<span class="t" style="top:328.52px;font-size:8px;line-height:10px;color:#1414ff;left:103.69px;width:28.91px;transform:scaleX(0.845);transform-origin:100% 0;">1.50492</span>
<div style="left:3.00px;top:351.70px;width:132.50px;height:1.00px;background:#dfdfdf;"></div>
<svg class="a" style="left:5.6px;top:342.87499999999994px" width="6.2" height="6.2" viewBox="0 0 8 8"><path d="M2.4 0.6h3.2v3h2L4 7.6 0.4 3.6h2z" fill="#e8541c" stroke="#b83c10" stroke-width=".5"/><path d="M3.2 1.2h1.2v3h-1.2z" fill="#ffb080" opacity=".8"/></svg>
<span class="t" style="top:341.17px;font-size:8px;line-height:10px;color:#1a1a1a;left:15.40px;transform:scaleX(0.825);transform-origin:0 0;">CADCHF</span>
<span class="t" style="top:341.17px;font-size:8px;line-height:10px;color:#ff2020;left:65.69px;width:28.91px;transform:scaleX(0.845);transform-origin:100% 0;">0.74540</span>
<span class="t" style="top:341.17px;font-size:8px;line-height:10px;color:#ff2020;left:103.69px;width:28.91px;transform:scaleX(0.845);transform-origin:100% 0;">0.74548</span>
<div style="left:3.00px;top:364.35px;width:132.50px;height:1.00px;background:#dfdfdf;"></div>
<svg class="a" style="left:5.6px;top:355.52500000000003px" width="6.2" height="6.2" viewBox="0 0 8 8"><path d="M2.4 0.6h3.2v3h2L4 7.6 0.4 3.6h2z" fill="#e8541c" stroke="#b83c10" stroke-width=".5"/><path d="M3.2 1.2h1.2v3h-1.2z" fill="#ffb080" opacity=".8"/></svg>
<span class="t" style="top:353.83px;font-size:8px;line-height:10px;color:#1a1a1a;left:15.40px;transform:scaleX(0.825);transform-origin:0 0;">NZDJPY</span>
<span class="t" style="top:353.83px;font-size:8px;line-height:10px;color:#ff2020;left:70.13px;width:24.47px;transform:scaleX(0.845);transform-origin:100% 0;">71.208</span>
<span class="t" style="top:353.83px;font-size:8px;line-height:10px;color:#ff2020;left:108.13px;width:24.47px;transform:scaleX(0.845);transform-origin:100% 0;">71.217</span>
<div style="left:3.00px;top:377.00px;width:132.50px;height:1.00px;background:#dfdfdf;"></div>
<svg class="a" style="left:5.6px;top:368.175px" width="6.2" height="6.2" viewBox="0 0 8 8"><path d="M2.4 7.4h3.2v-3h2L4 0.4 0.4 4.4h2z" fill="#2fae2f" stroke="#1c861c" stroke-width=".5"/><path d="M3.2 6.8h1.2v-3h-1.2z" fill="#a0f0a0" opacity=".7"/></svg>
<span class="t" style="top:366.48px;font-size:8px;line-height:10px;color:#1a1a1a;left:15.40px;transform:scaleX(0.825);transform-origin:0 0;">NZDUSD</span>
<span class="t" style="top:366.48px;font-size:8px;line-height:10px;color:#1414ff;left:65.69px;width:28.91px;transform:scaleX(0.845);transform-origin:100% 0;">0.65739</span>
<span class="t" style="top:366.48px;font-size:8px;line-height:10px;color:#1414ff;left:103.69px;width:28.91px;transform:scaleX(0.845);transform-origin:100% 0;">0.65749</span>
<div style="left:3.00px;top:377.35px;width:132.50px;height:12.65px;background:#f7e7a2;"></div>
<div style="left:3.00px;top:389.65px;width:132.50px;height:1.00px;background:#dfdfdf;"></div>
<svg class="a" style="left:5.6px;top:380.825px" width="6.2" height="6.2" viewBox="0 0 8 8"><path d="M2.4 7.4h3.2v-3h2L4 0.4 0.4 4.4h2z" fill="#2fae2f" stroke="#1c861c" stroke-width=".5"/><path d="M3.2 6.8h1.2v-3h-1.2z" fill="#a0f0a0" opacity=".7"/></svg>
<span class="t" style="top:379.12px;font-size:8px;line-height:10px;color:#1a1a1a;left:15.40px;transform:scaleX(0.825);transform-origin:0 0;">XAGUSD</span>
<span class="t" style="top:379.12px;font-size:8px;line-height:10px;color:#1414ff;left:70.13px;width:24.47px;transform:scaleX(0.845);transform-origin:100% 0;">14.845</span>
<span class="t" style="top:379.12px;font-size:8px;line-height:10px;color:#1414ff;left:108.13px;width:24.47px;transform:scaleX(0.845);transform-origin:100% 0;">14.851</span>
<div style="left:3.00px;top:390.00px;width:132.50px;height:12.65px;background:#f7e7a2;"></div>
<div style="left:3.00px;top:402.30px;width:132.50px;height:1.00px;background:#dfdfdf;"></div>
<svg class="a" style="left:5.6px;top:393.47499999999997px" width="6.2" height="6.2" viewBox="0 0 8 8"><path d="M2.4 7.4h3.2v-3h2L4 0.4 0.4 4.4h2z" fill="#2fae2f" stroke="#1c861c" stroke-width=".5"/><path d="M3.2 6.8h1.2v-3h-1.2z" fill="#a0f0a0" opacity=".7"/></svg>
<span class="t" style="top:391.77px;font-size:8px;line-height:10px;color:#1a1a1a;left:15.40px;transform:scaleX(0.825);transform-origin:0 0;">XAUUSD</span>
<span class="t" style="top:391.77px;font-size:8px;line-height:10px;color:#1414ff;left:65.69px;width:28.91px;transform:scaleX(0.845);transform-origin:100% 0;">1337.85</span>
<span class="t" style="top:391.77px;font-size:8px;line-height:10px;color:#1414ff;left:103.69px;width:28.91px;transform:scaleX(0.845);transform-origin:100% 0;">1338.02</span>
<div style="left:3.00px;top:414.95px;width:132.50px;height:1.00px;background:#dfdfdf;"></div>
<svg class="a" style="left:5.6px;top:406.12499999999994px" width="6.2" height="6.2" viewBox="0 0 8 8"><path d="M2.4 7.4h3.2v-3h2L4 0.4 0.4 4.4h2z" fill="#2fae2f" stroke="#1c861c" stroke-width=".5"/><path d="M3.2 6.8h1.2v-3h-1.2z" fill="#a0f0a0" opacity=".7"/></svg>
<span class="t" style="top:404.42px;font-size:8px;line-height:10px;color:#1a1a1a;left:15.40px;transform:scaleX(0.825);transform-origin:0 0;">EURPLN</span>
<span class="t" style="top:404.42px;font-size:8px;line-height:10px;color:#1414ff;left:65.69px;width:28.91px;transform:scaleX(0.845);transform-origin:100% 0;">4.25790</span>
<span class="t" style="top:404.42px;font-size:8px;line-height:10px;color:#1414ff;left:103.69px;width:28.91px;transform:scaleX(0.845);transform-origin:100% 0;">4.25826</span>
<div style="left:3.00px;top:427.60px;width:132.50px;height:1.00px;background:#dfdfdf;"></div>
<svg class="a" style="left:5.6px;top:418.77500000000003px" width="6.2" height="6.2" viewBox="0 0 8 8"><path d="M2.4 7.4h3.2v-3h2L4 0.4 0.4 4.4h2z" fill="#2fae2f" stroke="#1c861c" stroke-width=".5"/><path d="M3.2 6.8h1.2v-3h-1.2z" fill="#a0f0a0" opacity=".7"/></svg>
<span class="t" style="top:417.08px;font-size:8px;line-height:10px;color:#1a1a1a;left:15.40px;transform:scaleX(0.825);transform-origin:0 0;">GBPAUD</span>
<span class="t" style="top:417.08px;font-size:8px;line-height:10px;color:#1414ff;left:65.69px;width:28.91px;transform:scaleX(0.845);transform-origin:100% 0;">1.83428</span>
<span class="t" style="top:417.08px;font-size:8px;line-height:10px;color:#1414ff;left:103.69px;width:28.91px;transform:scaleX(0.845);transform-origin:100% 0;">1.83447</span>
<div style="left:3.00px;top:440.25px;width:132.50px;height:1.00px;background:#dfdfdf;"></div>
<svg class="a" style="left:5.6px;top:431.425px" width="6.2" height="6.2" viewBox="0 0 8 8"><path d="M2.4 7.4h3.2v-3h2L4 0.4 0.4 4.4h2z" fill="#2fae2f" stroke="#1c861c" stroke-width=".5"/><path d="M3.2 6.8h1.2v-3h-1.2z" fill="#a0f0a0" opacity=".7"/></svg>
<span class="t" style="top:429.73px;font-size:8px;line-height:10px;color:#1a1a1a;left:15.40px;transform:scaleX(0.825);transform-origin:0 0;">GBPCAD</span>
<span class="t" style="top:429.73px;font-size:8px;line-height:10px;color:#1414ff;left:65.69px;width:28.91px;transform:scaleX(0.845);transform-origin:100% 0;">1.68877</span>
<span class="t" style="top:429.73px;font-size:8px;line-height:10px;color:#1414ff;left:103.69px;width:28.91px;transform:scaleX(0.845);transform-origin:100% 0;">1.68893</span>
<div style="left:3.00px;top:452.90px;width:132.50px;height:1.00px;background:#dfdfdf;"></div>
<svg class="a" style="left:5.6px;top:444.075px" width="6.2" height="6.2" viewBox="0 0 8 8"><path d="M2.4 0.6h3.2v3h2L4 7.6 0.4 3.6h2z" fill="#e8541c" stroke="#b83c10" stroke-width=".5"/><path d="M3.2 1.2h1.2v3h-1.2z" fill="#ffb080" opacity=".8"/></svg>
<span class="t" style="top:442.38px;font-size:8px;line-height:10px;color:#1a1a1a;left:15.40px;transform:scaleX(0.825);transform-origin:0 0;">GBPNZD</span>
<span class="t" style="top:442.38px;font-size:8px;line-height:10px;color:#ff2020;left:65.69px;width:28.91px;transform:scaleX(0.845);transform-origin:100% 0;">1.92865</span>
<span class="t" style="top:442.38px;font-size:8px;line-height:10px;color:#ff2020;left:103.69px;width:28.91px;transform:scaleX(0.845);transform-origin:100% 0;">1.92897</span>
<div style="left:3.00px;top:465.55px;width:132.50px;height:1.00px;background:#dfdfdf;"></div>
<svg class="a" style="left:5.6px;top:456.72499999999997px" width="6.2" height="6.2" viewBox="0 0 8 8"><path d="M2.4 7.4h3.2v-3h2L4 0.4 0.4 4.4h2z" fill="#2fae2f" stroke="#1c861c" stroke-width=".5"/><path d="M3.2 6.8h1.2v-3h-1.2z" fill="#a0f0a0" opacity=".7"/></svg>
<span class="t" style="top:455.02px;font-size:8px;line-height:10px;color:#1a1a1a;left:15.40px;transform:scaleX(0.825);transform-origin:0 0;">NZDCAD</span>
<span class="t" style="top:455.02px;font-size:8px;line-height:10px;color:#1414ff;left:65.69px;width:28.91px;transform:scaleX(0.845);transform-origin:100% 0;">0.87552</span>
<span class="t" style="top:455.02px;font-size:8px;line-height:10px;color:#1414ff;left:103.69px;width:28.91px;transform:scaleX(0.845);transform-origin:100% 0;">0.87567</span>
<div style="left:3.00px;top:478.20px;width:132.50px;height:1.00px;background:#dfdfdf;"></div>
<svg class="a" style="left:5.6px;top:469.37499999999994px" width="6.2" height="6.2" viewBox="0 0 8 8"><path d="M2.4 7.4h3.2v-3h2L4 0.4 0.4 4.4h2z" fill="#2fae2f" stroke="#1c861c" stroke-width=".5"/><path d="M3.2 6.8h1.2v-3h-1.2z" fill="#a0f0a0" opacity=".7"/></svg>
<span class="t" style="top:467.67px;font-size:8px;line-height:10px;color:#1a1a1a;left:15.40px;transform:scaleX(0.825);transform-origin:0 0;">NZDCHF</span>
<span class="t" style="top:467.67px;font-size:8px;line-height:10px;color:#1414ff;left:65.69px;width:28.91px;transform:scaleX(0.845);transform-origin:100% 0;">0.65265</span>
<span class="t" style="top:467.67px;font-size:8px;line-height:10px;color:#1414ff;left:103.69px;width:28.91px;transform:scaleX(0.845);transform-origin:100% 0;">0.65276</span>
<div style="left:59.00px;top:73.00px;width:1.00px;height:407.00px;background:#dedede;"></div>
<div style="left:97.50px;top:73.00px;width:1.00px;height:407.00px;background:#dedede;"></div>
<div style="left:136.00px;top:73.00px;width:10.50px;height:407.00px;background:#f0f0f0;"></div>
<div style="left:137.00px;top:82.40px;width:9.00px;height:101.00px;background:linear-gradient(90deg,#dedede,#f6f6f6 40%,#d2d2d2);border:1px solid #9a9a9a;border-radius:2px;box-sizing:border-box;"></div>
<div style="left:139.50px;top:129.00px;width:4.00px;height:1.00px;background:#7a7a7a;"></div>
<div style="left:139.50px;top:131.00px;width:4.00px;height:1.00px;background:#7a7a7a;"></div>
<div style="left:139.50px;top:133.00px;width:4.00px;height:1.00px;background:#7a7a7a;"></div>
<svg class="a" style="left:138.5px;top:76px" width="6" height="4" viewBox="0 0 6 4"><path d="M0 3.5L3 .5l3 3z" fill="#444"/></svg>
<svg class="a" style="left:138.5px;top:474px" width="6" height="4" viewBox="0 0 6 4"><path d="M0 .5L3 3.5l3-3z" fill="#444"/></svg>
<div style="left:4.00px;top:480.00px;width:46.00px;height:13.00px;background:#fff;border:1px solid #555;border-top:none;box-sizing:border-box;"></div>
<span class="t" style="top:481.30px;font-size:8px;line-height:10px;color:#1a1a1a;left:10.00px;transform:scaleX(0.954);transform-origin:0 0;">Символы</span>
<span class="t" style="top:481.30px;font-size:8px;line-height:10px;color:#777;left:56.00px;transform:scaleX(0.965);transform-origin:0 0;">Тиковый график</span>
<div style="left:121.00px;top:481.50px;width:1.00px;height:9.00px;background:#888;"></div>
<div class="a" style="left:0;top:61px;width:1061px;height:421.6px;overflow:hidden;"><div class="a" style="left:0;top:-61px;width:1061px;height:630px;"><div style="left:149.00px;top:61.00px;width:912.00px;height:422.00px;background:linear-gradient(90deg,#7c7c7c 0,#9a9a9a 1.2px,#a4a4a4 6px,#a4a4a4);"></div><div style="left:620.00px;top:61.00px;width:1.20px;height:422.00px;background:#6a6a6a;"></div>
<div style="left:151.00px;top:294.80px;width:910.00px;height:1.00px;background:#6a6a6a;"></div>
<div style="left:155.50px;top:61.70px;width:464.50px;height:233.30px;background:linear-gradient(#c6d8ef,#adc7e7 8px,#b2cae8 20px,#c4d7ee 60px,#c9dbf0);border:1px solid #6f7f92;border-radius:3.5px 3.5px 0 0;box-sizing:border-box;"></div>
<div style="left:618.40px;top:65.70px;width:1.20px;height:229.30px;background:#3aa0b8;"></div>
<div style="left:156.50px;top:293.40px;width:462.50px;height:1.20px;background:#3a8ea8;"></div>
<div style="left:160.10px;top:81.10px;width:455.10px;height:207.60px;background:#000;border:1px solid #3c3c3c;box-sizing:border-box;"></div>
<svg class="a" style="left:162.0px;top:67.7px" width="10" height="9" viewBox="0 0 10 9"><rect x=".5" y=".5" width="6.2" height="5" rx=".8" fill="#e9f1fb" stroke="#5f8fd0" stroke-width=".9"/><rect x="2.8" y="3" width="6.7" height="5.5" rx=".8" fill="#ddeafa" stroke="#4c82cc" stroke-width=".9"/><path d="M4.2 7V5.2M5.7 7V4.6M7.2 7V5.4" stroke="#4c82cc" stroke-width=".7"/></svg>
<span class="t" style="top:67.90px;font-size:8.4px;line-height:10.4px;color:#2a2f3a;left:173.80px;transform:scaleX(0.803);transform-origin:0 0;">EURUSD,H4</span>
<div style="left:595.40px;top:67.10px;width:19.00px;height:11.00px;background:linear-gradient(#e9a99a,#d9624a 45%,#c23a20 50%,#d46a4e);border:1px solid #7a3a30;border-radius:2px;box-sizing:border-box;"></div>
<div style="left:574.40px;top:67.10px;width:19.00px;height:11.00px;background:linear-gradient(#d6e3f3,#bfd2ea);border:1px solid #8c9cb0;border-radius:2px;box-sizing:border-box;"></div>
<div style="left:553.40px;top:67.10px;width:19.00px;height:11.00px;background:linear-gradient(#d6e3f3,#bfd2ea);border:1px solid #8c9cb0;border-radius:2px;box-sizing:border-box;"></div>
<svg class="a" style="left:601.4px;top:69.60000000000001px" width="7" height="6" viewBox="0 0 7 6"><path d="M1 .8l5 4.4M6 .8L1 5.2" stroke="#fff" stroke-width="1.6"/></svg>
<svg class="a" style="left:580.6999999999999px;top:70.00000000000001px" width="6.4" height="5.4" viewBox="0 0 6.4 5.4"><rect x=".5" y=".5" width="5.4" height="4.4" fill="#fff" stroke="#4e5866" stroke-width=".9"/><rect x="2" y="2" width="2.4" height="1.4" fill="#4e5866"/></svg>
<svg class="a" style="left:559.1px;top:72.80000000000001px" width="7.6" height="3.2" viewBox="0 0 7.6 3.2"><rect x=".5" y=".5" width="6.6" height="2.2" rx=".7" fill="#fff" stroke="#6a7482" stroke-width=".7"/></svg>
<div style="left:621.20px;top:61.70px;width:468.60px;height:233.30px;background:linear-gradient(#dbe6f3,#d4e1f0 10px,#d9e4f2 20px,#dfe8f4);border:1px solid #7d8894;border-radius:3.5px 3.5px 0 0;box-sizing:border-box;"></div>
<div style="left:625.80px;top:81.10px;width:459.20px;height:207.60px;background:#000;border:1px solid #3c3c3c;box-sizing:border-box;"></div>
<svg class="a" style="left:627.7px;top:67.7px" width="10" height="9" viewBox="0 0 10 9"><rect x=".5" y=".5" width="6.2" height="5" rx=".8" fill="#e9f1fb" stroke="#5f8fd0" stroke-width=".9"/><rect x="2.8" y="3" width="6.7" height="5.5" rx=".8" fill="#ddeafa" stroke="#4c82cc" stroke-width=".9"/><path d="M4.2 7V5.2M5.7 7V4.6M7.2 7V5.4" stroke="#4c82cc" stroke-width=".7"/></svg>
<span class="t" style="top:67.90px;font-size:8.4px;line-height:10.4px;color:#4a5058;left:639.50px;transform:scaleX(0.793);transform-origin:0 0;">GBPUSD,H4</span>
<div style="left:1065.20px;top:67.10px;width:19.00px;height:11.00px;background:linear-gradient(#e6eef8,#d6e1ef);border:1px solid #8c9cb0;border-radius:2px;box-sizing:border-box;"></div>
<div style="left:1044.20px;top:67.10px;width:19.00px;height:11.00px;background:linear-gradient(#e6eef8,#d6e1ef);border:1px solid #8c9cb0;border-radius:2px;box-sizing:border-box;"></div>
<div style="left:1023.20px;top:67.10px;width:19.00px;height:11.00px;background:linear-gradient(#e6eef8,#d6e1ef);border:1px solid #8c9cb0;border-radius:2px;box-sizing:border-box;"></div>
<svg class="a" style="left:1071.2000000000003px;top:69.60000000000001px" width="7" height="6" viewBox="0 0 7 6"><path d="M1 .8l5 4.4M6 .8L1 5.2" stroke="#fff" stroke-width="1.7"/><path d="M1 .8l5 4.4M6 .8L1 5.2" stroke="#7d8794" stroke-width=".6"/></svg>
<svg class="a" style="left:1050.5000000000002px;top:70.00000000000001px" width="6.4" height="5.4" viewBox="0 0 6.4 5.4"><rect x=".5" y=".5" width="5.4" height="4.4" fill="#fff" stroke="#4e5866" stroke-width=".9"/><rect x="2" y="2" width="2.4" height="1.4" fill="#4e5866"/></svg>
<svg class="a" style="left:1028.9000000000003px;top:72.80000000000001px" width="7.6" height="3.2" viewBox="0 0 7.6 3.2"><rect x=".5" y=".5" width="6.6" height="2.2" rx=".7" fill="#fff" stroke="#6a7482" stroke-width=".7"/></svg>
<div style="left:151.30px;top:295.50px;width:468.70px;height:232.80px;background:linear-gradient(#dbe6f3,#d4e1f0 10px,#d9e4f2 20px,#dfe8f4);border:1px solid #7d8894;border-radius:3.5px 3.5px 0 0;box-sizing:border-box;"></div>
<div style="left:155.90px;top:314.90px;width:459.30px;height:207.10px;background:#000;border:1px solid #3c3c3c;box-sizing:border-box;"></div>
<svg class="a" style="left:157.8px;top:301.5px" width="10" height="9" viewBox="0 0 10 9"><rect x=".5" y=".5" width="6.2" height="5" rx=".8" fill="#e9f1fb" stroke="#5f8fd0" stroke-width=".9"/><rect x="2.8" y="3" width="6.7" height="5.5" rx=".8" fill="#ddeafa" stroke="#4c82cc" stroke-width=".9"/><path d="M4.2 7V5.2M5.7 7V4.6M7.2 7V5.4" stroke="#4c82cc" stroke-width=".7"/></svg>
<span class="t" style="top:301.70px;font-size:8.4px;line-height:10.4px;color:#4a5058;left:169.60px;transform:scaleX(0.817);transform-origin:0 0;">USDCHF,H4</span>
<div style="left:595.40px;top:300.90px;width:19.00px;height:11.00px;background:linear-gradient(#e6eef8,#d6e1ef);border:1px solid #8c9cb0;border-radius:2px;box-sizing:border-box;"></div>
<div style="left:574.40px;top:300.90px;width:19.00px;height:11.00px;background:linear-gradient(#e6eef8,#d6e1ef);border:1px solid #8c9cb0;border-radius:2px;box-sizing:border-box;"></div>
<div style="left:553.40px;top:300.90px;width:19.00px;height:11.00px;background:linear-gradient(#e6eef8,#d6e1ef);border:1px solid #8c9cb0;border-radius:2px;box-sizing:border-box;"></div>
<svg class="a" style="left:601.4px;top:303.4px" width="7" height="6" viewBox="0 0 7 6"><path d="M1 .8l5 4.4M6 .8L1 5.2" stroke="#fff" stroke-width="1.7"/><path d="M1 .8l5 4.4M6 .8L1 5.2" stroke="#7d8794" stroke-width=".6"/></svg>
<svg class="a" style="left:580.6999999999999px;top:303.79999999999995px" width="6.4" height="5.4" viewBox="0 0 6.4 5.4"><rect x=".5" y=".5" width="5.4" height="4.4" fill="#fff" stroke="#4e5866" stroke-width=".9"/><rect x="2" y="2" width="2.4" height="1.4" fill="#4e5866"/></svg>
<svg class="a" style="left:559.1px;top:306.59999999999997px" width="7.6" height="3.2" viewBox="0 0 7.6 3.2"><rect x=".5" y=".5" width="6.6" height="2.2" rx=".7" fill="#fff" stroke="#6a7482" stroke-width=".7"/></svg>
<div style="left:621.20px;top:295.50px;width:468.60px;height:232.80px;background:linear-gradient(#dbe6f3,#d4e1f0 10px,#d9e4f2 20px,#dfe8f4);border:1px solid #7d8894;border-radius:3.5px 3.5px 0 0;box-sizing:border-box;"></div>
<div style="left:625.80px;top:314.90px;width:459.20px;height:207.10px;background:#000;border:1px solid #3c3c3c;box-sizing:border-box;"></div>
<svg class="a" style="left:627.7px;top:301.5px" width="10" height="9" viewBox="0 0 10 9"><rect x=".5" y=".5" width="6.2" height="5" rx=".8" fill="#e9f1fb" stroke="#5f8fd0" stroke-width=".9"/><rect x="2.8" y="3" width="6.7" height="5.5" rx=".8" fill="#ddeafa" stroke="#4c82cc" stroke-width=".9"/><path d="M4.2 7V5.2M5.7 7V4.6M7.2 7V5.4" stroke="#4c82cc" stroke-width=".7"/></svg>
<span class="t" style="top:301.70px;font-size:8.4px;line-height:10.4px;color:#4a5058;left:639.50px;transform:scaleX(0.853);transform-origin:0 0;">USDJPY,H4</span>
<div style="left:1065.20px;top:300.90px;width:19.00px;height:11.00px;background:linear-gradient(#e6eef8,#d6e1ef);border:1px solid #8c9cb0;border-radius:2px;box-sizing:border-box;"></div>
<div style="left:1044.20px;top:300.90px;width:19.00px;height:11.00px;background:linear-gradient(#e6eef8,#d6e1ef);border:1px solid #8c9cb0;border-radius:2px;box-sizing:border-box;"></div>
<div style="left:1023.20px;top:300.90px;width:19.00px;height:11.00px;background:linear-gradient(#e6eef8,#d6e1ef);border:1px solid #8c9cb0;border-radius:2px;box-sizing:border-box;"></div>
<svg class="a" style="left:1071.2000000000003px;top:303.4px" width="7" height="6" viewBox="0 0 7 6"><path d="M1 .8l5 4.4M6 .8L1 5.2" stroke="#fff" stroke-width="1.7"/><path d="M1 .8l5 4.4M6 .8L1 5.2" stroke="#7d8794" stroke-width=".6"/></svg>
<svg class="a" style="left:1050.5000000000002px;top:303.79999999999995px" width="6.4" height="5.4" viewBox="0 0 6.4 5.4"><rect x=".5" y=".5" width="5.4" height="4.4" fill="#fff" stroke="#4e5866" stroke-width=".9"/><rect x="2" y="2" width="2.4" height="1.4" fill="#4e5866"/></svg>
<svg class="a" style="left:1028.9000000000003px;top:306.59999999999997px" width="7.6" height="3.2" viewBox="0 0 7.6 3.2"><rect x=".5" y=".5" width="6.6" height="2.2" rx=".7" fill="#fff" stroke="#6a7482" stroke-width=".7"/></svg>
<svg class="a" style="left:150px;top:61px" width="911" height="422" viewBox="150 61 911 422"><path d="M183.6 83.4V188.0M203.8 83.4V188.0M224.0 83.4V188.0M244.2 83.4V188.0M264.4 83.4V188.0M284.6 83.4V188.0M304.8 83.4V188.0M325.0 83.4V188.0M345.2 83.4V188.0M365.4 83.4V188.0M385.6 83.4V188.0M405.8 83.4V188.0M426.0 83.4V188.0M446.2 83.4V188.0M466.4 83.4V188.0M486.6 83.4V188.0M506.8 83.4V188.0M527.0 83.4V188.0M547.2 83.4V188.0M567.4 83.4V188.0M162.4 102.5H585.7M162.4 123.4H585.7M162.4 144.4H585.7M162.4 165.4H585.7M162.4 186.4H585.7" stroke="#8794a2" stroke-width=".75" stroke-dasharray="2.1 1.8" fill="none"/><path d="M183.6 189.5V214.3M203.8 189.5V214.3M224.0 189.5V214.3M244.2 189.5V214.3M264.4 189.5V214.3M284.6 189.5V214.3M304.8 189.5V214.3M325.0 189.5V214.3M345.2 189.5V214.3M365.4 189.5V214.3M385.6 189.5V214.3M405.8 189.5V214.3M426.0 189.5V214.3M446.2 189.5V214.3M466.4 189.5V214.3M486.6 189.5V214.3M506.8 189.5V214.3M527.0 189.5V214.3M547.2 189.5V214.3M567.4 189.5V214.3M162.4 206.5H585.7" stroke="#8794a2" stroke-width=".75" stroke-dasharray="2.1 1.8" fill="none"/><path d="M183.6 215.5V239.8M203.8 215.5V239.8M224.0 215.5V239.8M244.2 215.5V239.8M264.4 215.5V239.8M284.6 215.5V239.8M304.8 215.5V239.8M325.0 215.5V239.8M345.2 215.5V239.8M365.4 215.5V239.8M385.6 215.5V239.8M405.8 215.5V239.8M426.0 215.5V239.8M446.2 215.5V239.8M466.4 215.5V239.8M486.6 215.5V239.8M506.8 215.5V239.8M527.0 215.5V239.8M547.2 215.5V239.8M567.4 215.5V239.8M162.4 221.4H585.7M162.4 235.0H585.7" stroke="#8794a2" stroke-width=".75" stroke-dasharray="2.1 1.8" fill="none"/><path d="M183.6 241.0V275.2M203.8 241.0V275.2M224.0 241.0V275.2M244.2 241.0V275.2M264.4 241.0V275.2M284.6 241.0V275.2M304.8 241.0V275.2M325.0 241.0V275.2M345.2 241.0V275.2M365.4 241.0V275.2M385.6 241.0V275.2M405.8 241.0V275.2M426.0 241.0V275.2M446.2 241.0V275.2M466.4 241.0V275.2M486.6 241.0V275.2M506.8 241.0V275.2M527.0 241.0V275.2M547.2 241.0V275.2M567.4 241.0V275.2M162.4 252.0H585.7M162.4 265.5H585.7" stroke="#8794a2" stroke-width=".75" stroke-dasharray="2.1 1.8" fill="none"/><path d="M162.4 108.8L585.7 108.8" stroke="#46525c" stroke-width="1.2" /><path d="M162.4 275.5V83.4H585.7V275.5H162.4" fill="none" stroke="#d8d8d8" stroke-width=".8"/><path d="M162.4 188.7L585.7 188.7" stroke="#c8c8c8" stroke-width="1.7" /><path d="M162.4 214.5L585.7 214.5" stroke="#c8c8c8" stroke-width="1.7" /><path d="M162.4 239.8L585.7 239.8" stroke="#c8c8c8" stroke-width="1.7" /><path d="M162.4 275.5L585.7 275.5" stroke="#d0d0d0" stroke-width="1" stroke-dasharray="1.2 1.2"/><path d="M497.8 83.5h4.4l-2.2 2.6z" fill="#b8c0c8"/><path d="M163.6 152.0L163.6 165.5" stroke="#14d214" stroke-width="0.9" /><rect x="162.1" y="154.3" width="3.0" height="10.7" fill="#ffffff" stroke="#14d214" stroke-width=".8"/><path d="M168.7 161.7L168.7 167.5" stroke="#14d214" stroke-width="0.9" /><rect x="167.2" y="164.5" width="3.0" height="2.8" fill="#ffffff" stroke="#14d214" stroke-width=".8"/><path d="M173.7 160.5L173.7 168.0" stroke="#14d214" stroke-width="0.9" /><rect x="172.2" y="162.8" width="3.0" height="4.7" fill="#000000" stroke="#14d214" stroke-width=".8"/><path d="M178.8 162.8L178.8 166.0" stroke="#14d214" stroke-width="0.9" /><rect x="177.2" y="163.4" width="3.0" height="2.3" fill="#ffffff" stroke="#14d214" stroke-width=".8"/><path d="M183.8 163.0L183.8 171.0" stroke="#14d214" stroke-width="0.9" /><rect x="182.3" y="164.8" width="3.0" height="4.6" fill="#ffffff" stroke="#14d214" stroke-width=".8"/><path d="M188.8 167.0L188.8 173.0" stroke="#14d214" stroke-width="0.9" /><rect x="187.3" y="169.0" width="3.0" height="3.0" fill="#ffffff" stroke="#14d214" stroke-width=".8"/><path d="M193.9 169.0L193.9 182.0" stroke="#14d214" stroke-width="0.9" /><rect x="192.4" y="170.7" width="3.0" height="7.3" fill="#ffffff" stroke="#14d214" stroke-width=".8"/><path d="M198.9 176.0L198.9 181.0" stroke="#14d214" stroke-width="0.9" /><path d="M197.2 178.6L200.6 178.6" stroke="#14d214" stroke-width="1.1" /><path d="M204.0 174.0L204.0 180.0" stroke="#14d214" stroke-width="0.9" /><rect x="202.5" y="175.0" width="3.0" height="4.7" fill="#000000" stroke="#14d214" stroke-width=".8"/><path d="M209.0 174.0L209.0 178.0" stroke="#14d214" stroke-width="0.9" /><path d="M207.3 176.0L210.7 176.0" stroke="#14d214" stroke-width="1.1" /><path d="M214.1 174.5L214.1 182.0" stroke="#14d214" stroke-width="0.9" /><rect x="212.6" y="175.0" width="3.0" height="3.0" fill="#ffffff" stroke="#14d214" stroke-width=".8"/><path d="M219.1 174.0L219.1 180.0" stroke="#14d214" stroke-width="0.9" /><path d="M217.4 178.5L220.8 178.5" stroke="#14d214" stroke-width="1.1" /><path d="M224.2 174.0L224.2 186.0" stroke="#14d214" stroke-width="0.9" /><rect x="222.7" y="177.0" width="3.0" height="3.0" fill="#000000" stroke="#14d214" stroke-width=".8"/><path d="M229.2 175.5L229.2 180.3" stroke="#14d214" stroke-width="0.9" /><rect x="227.8" y="177.0" width="3.0" height="3.0" fill="#ffffff" stroke="#14d214" stroke-width=".8"/><path d="M234.3 175.0L234.3 181.0" stroke="#14d214" stroke-width="0.9" /><rect x="232.8" y="177.0" width="3.0" height="3.5" fill="#000000" stroke="#14d214" stroke-width=".8"/><path d="M239.3 176.0L239.3 182.0" stroke="#14d214" stroke-width="0.9" /><rect x="237.8" y="177.5" width="3.0" height="3.5" fill="#ffffff" stroke="#14d214" stroke-width=".8"/><path d="M244.4 169.0L244.4 181.0" stroke="#14d214" stroke-width="0.9" /><rect x="242.9" y="172.4" width="3.0" height="7.9" fill="#000000" stroke="#14d214" stroke-width=".8"/><path d="M249.4 165.0L249.4 175.0" stroke="#14d214" stroke-width="0.9" /><rect x="247.9" y="168.5" width="3.0" height="4.5" fill="#000000" stroke="#14d214" stroke-width=".8"/><path d="M254.5 158.5L254.5 177.0" stroke="#14d214" stroke-width="0.9" /><rect x="253.0" y="166.0" width="3.0" height="3.0" fill="#000000" stroke="#14d214" stroke-width=".8"/><path d="M259.6 159.0L259.6 169.0" stroke="#14d214" stroke-width="0.9" /><rect x="258.1" y="163.5" width="3.0" height="3.5" fill="#000000" stroke="#14d214" stroke-width=".8"/><path d="M264.6 157.0L264.6 168.0" stroke="#14d214" stroke-width="0.9" /><rect x="263.1" y="158.5" width="3.0" height="7.5" fill="#000000" stroke="#14d214" stroke-width=".8"/><path d="M269.6 154.0L269.6 161.0" stroke="#14d214" stroke-width="0.9" /><rect x="268.1" y="159.0" width="3.0" height="1.6" fill="#ffffff" stroke="#14d214" stroke-width=".8"/><path d="M274.7 158.0L274.7 167.5" stroke="#14d214" stroke-width="0.9" /><rect x="273.2" y="158.5" width="3.0" height="2.3" fill="#000000" stroke="#14d214" stroke-width=".8"/><path d="M279.8 150.0L279.8 164.0" stroke="#14d214" stroke-width="0.9" /><rect x="278.2" y="152.2" width="3.0" height="6.8" fill="#000000" stroke="#14d214" stroke-width=".8"/><path d="M284.8 142.5L284.8 157.0" stroke="#14d214" stroke-width="0.9" /><rect x="283.3" y="143.3" width="3.0" height="9.2" fill="#000000" stroke="#14d214" stroke-width=".8"/><path d="M289.9 124.1L289.9 145.0" stroke="#14d214" stroke-width="0.9" /><rect x="288.4" y="133.3" width="3.0" height="10.4" fill="#000000" stroke="#14d214" stroke-width=".8"/><path d="M294.9 127.0L294.9 134.0" stroke="#14d214" stroke-width="0.9" /><rect x="293.4" y="129.3" width="3.0" height="4.3" fill="#000000" stroke="#14d214" stroke-width=".8"/><path d="M299.9 126.5L299.9 132.5" stroke="#14d214" stroke-width="0.9" /><path d="M298.2 130.6L301.6 130.6" stroke="#14d214" stroke-width="1.1" /><path d="M305.0 117.7L305.0 132.5" stroke="#14d214" stroke-width="0.9" /><path d="M303.3 130.9L306.7 130.9" stroke="#14d214" stroke-width="1.1" /><path d="M310.0 124.0L310.0 136.3" stroke="#14d214" stroke-width="0.9" /><rect x="308.5" y="130.2" width="3.0" height="5.8" fill="#ffffff" stroke="#14d214" stroke-width=".8"/><path d="M315.1 122.8L315.1 139.7" stroke="#14d214" stroke-width="0.9" /><rect x="313.6" y="131.6" width="3.0" height="5.1" fill="#000000" stroke="#14d214" stroke-width=".8"/><path d="M320.1 122.8L320.1 133.0" stroke="#14d214" stroke-width="0.9" /><rect x="318.6" y="129.3" width="3.0" height="2.9" fill="#000000" stroke="#14d214" stroke-width=".8"/><path d="M325.2 125.0L325.2 131.0" stroke="#14d214" stroke-width="0.9" /><rect x="323.7" y="125.9" width="3.0" height="4.3" fill="#000000" stroke="#14d214" stroke-width=".8"/><path d="M330.2 123.0L330.2 127.5" stroke="#14d214" stroke-width="0.9" /><path d="M328.6 125.5L331.9 125.5" stroke="#14d214" stroke-width="1.1" /><path d="M335.3 115.0L335.3 127.0" stroke="#14d214" stroke-width="0.9" /><rect x="333.8" y="117.4" width="3.0" height="8.1" fill="#000000" stroke="#14d214" stroke-width=".8"/><path d="M340.4 105.9L340.4 128.9" stroke="#14d214" stroke-width="0.9" /><rect x="338.9" y="112.0" width="3.0" height="5.8" fill="#000000" stroke="#14d214" stroke-width=".8"/><path d="M345.4 109.3L345.4 137.6" stroke="#14d214" stroke-width="0.9" /><rect x="343.9" y="112.0" width="3.0" height="23.6" fill="#ffffff" stroke="#14d214" stroke-width=".8"/><path d="M350.4 135.0L350.4 142.5" stroke="#14d214" stroke-width="0.9" /><rect x="348.9" y="135.2" width="3.0" height="6.5" fill="#ffffff" stroke="#14d214" stroke-width=".8"/><path d="M355.5 136.5L355.5 143.0" stroke="#14d214" stroke-width="0.9" /><rect x="354.0" y="139.0" width="3.0" height="2.7" fill="#000000" stroke="#14d214" stroke-width=".8"/><path d="M360.5 136.0L360.5 141.0" stroke="#14d214" stroke-width="0.9" /><rect x="359.0" y="136.3" width="3.0" height="3.7" fill="#000000" stroke="#14d214" stroke-width=".8"/><path d="M365.6 132.5L365.6 141.5" stroke="#14d214" stroke-width="0.9" /><rect x="364.1" y="133.9" width="3.0" height="3.1" fill="#000000" stroke="#14d214" stroke-width=".8"/><path d="M370.6 105.0L370.6 150.9" stroke="#14d214" stroke-width="0.9" /><rect x="369.1" y="114.0" width="3.0" height="20.7" fill="#000000" stroke="#14d214" stroke-width=".8"/><path d="M375.7 109.0L375.7 132.0" stroke="#14d214" stroke-width="0.9" /><rect x="374.2" y="111.3" width="3.0" height="3.4" fill="#000000" stroke="#14d214" stroke-width=".8"/><path d="M380.8 110.0L380.8 122.5" stroke="#14d214" stroke-width="0.9" /><rect x="379.2" y="111.3" width="3.0" height="7.4" fill="#ffffff" stroke="#14d214" stroke-width=".8"/><path d="M385.8 117.0L385.8 121.5" stroke="#14d214" stroke-width="0.9" /><path d="M384.1 119.1L387.5 119.1" stroke="#14d214" stroke-width="1.1" /><path d="M390.9 118.5L390.9 123.2" stroke="#14d214" stroke-width="0.9" /><rect x="389.4" y="119.0" width="3.0" height="3.9" fill="#ffffff" stroke="#14d214" stroke-width=".8"/><path d="M395.9 121.0L395.9 127.5" stroke="#14d214" stroke-width="0.9" /><path d="M394.2 122.9L397.6 122.9" stroke="#14d214" stroke-width="1.1" /><path d="M400.9 97.0L400.9 129.5" stroke="#14d214" stroke-width="0.9" /><rect x="399.4" y="102.0" width="3.0" height="21.2" fill="#000000" stroke="#14d214" stroke-width=".8"/><path d="M406.0 88.5L406.0 106.2" stroke="#14d214" stroke-width="0.9" /><rect x="404.5" y="92.4" width="3.0" height="9.8" fill="#000000" stroke="#14d214" stroke-width=".8"/><path d="M411.0 90.0L411.0 98.0" stroke="#14d214" stroke-width="0.9" /><rect x="409.5" y="92.0" width="3.0" height="4.0" fill="#ffffff" stroke="#14d214" stroke-width=".8"/><path d="M416.1 96.0L416.1 103.0" stroke="#14d214" stroke-width="0.9" /><rect x="414.6" y="98.4" width="3.0" height="3.8" fill="#ffffff" stroke="#14d214" stroke-width=".8"/><path d="M421.1 101.8L421.1 106.5" stroke="#14d214" stroke-width="0.9" /><rect x="419.6" y="102.2" width="3.0" height="3.8" fill="#ffffff" stroke="#14d214" stroke-width=".8"/><path d="M426.2 103.5L426.2 113.0" stroke="#14d214" stroke-width="0.9" /><rect x="424.7" y="105.5" width="3.0" height="5.0" fill="#ffffff" stroke="#14d214" stroke-width=".8"/><path d="M431.2 104.0L431.2 111.0" stroke="#14d214" stroke-width="0.9" /><rect x="429.8" y="105.0" width="3.0" height="5.7" fill="#000000" stroke="#14d214" stroke-width=".8"/><path d="M436.3 100.0L436.3 113.0" stroke="#14d214" stroke-width="0.9" /><rect x="434.8" y="101.3" width="3.0" height="4.2" fill="#000000" stroke="#14d214" stroke-width=".8"/><path d="M441.4 98.4L441.4 105.0" stroke="#14d214" stroke-width="0.9" /><rect x="439.9" y="102.0" width="3.0" height="2.5" fill="#ffffff" stroke="#14d214" stroke-width=".8"/><path d="M446.4 100.5L446.4 106.0" stroke="#14d214" stroke-width="0.9" /><rect x="444.9" y="102.0" width="3.0" height="2.0" fill="#000000" stroke="#14d214" stroke-width=".8"/><path d="M451.4 101.0L451.4 106.0" stroke="#14d214" stroke-width="0.9" /><path d="M449.7 102.7L453.1 102.7" stroke="#14d214" stroke-width="1.1" /><path d="M456.5 95.2L456.5 104.0" stroke="#14d214" stroke-width="0.9" /><rect x="455.0" y="102.3" width="3.0" height="1.3" fill="#ffffff" stroke="#14d214" stroke-width=".8"/><path d="M461.5 97.0L461.5 108.8" stroke="#14d214" stroke-width="0.9" /><rect x="460.0" y="101.3" width="3.0" height="3.1" fill="#000000" stroke="#14d214" stroke-width=".8"/><path d="M466.6 95.0L466.6 106.0" stroke="#14d214" stroke-width="0.9" /><rect x="465.1" y="96.6" width="3.0" height="5.4" fill="#000000" stroke="#14d214" stroke-width=".8"/><path d="M471.6 92.8L471.6 99.0" stroke="#14d214" stroke-width="0.9" /><rect x="470.1" y="97.3" width="3.0" height="1.3" fill="#ffffff" stroke="#14d214" stroke-width=".8"/><path d="M476.7 96.0L476.7 98.6" stroke="#14d214" stroke-width="0.9" /><rect x="475.2" y="96.3" width="3.0" height="2.1" fill="#000000" stroke="#14d214" stroke-width=".8"/><path d="M481.8 94.0L481.8 98.0" stroke="#14d214" stroke-width="0.9" /><rect x="480.2" y="94.2" width="3.0" height="3.5" fill="#000000" stroke="#14d214" stroke-width=".8"/><path d="M486.8 90.0L486.8 97.4" stroke="#14d214" stroke-width="0.9" /><path d="M485.1 95.2L488.5 95.2" stroke="#14d214" stroke-width="1.1" /><path d="M491.9 91.8L491.9 104.0" stroke="#14d214" stroke-width="0.9" /><rect x="490.4" y="94.6" width="3.0" height="6.2" fill="#ffffff" stroke="#14d214" stroke-width=".8"/><path d="M496.9 98.0L496.9 114.0" stroke="#14d214" stroke-width="0.9" /><rect x="495.4" y="100.6" width="3.0" height="9.9" fill="#ffffff" stroke="#14d214" stroke-width=".8"/><path d="M501.9 110.0L501.9 116.8" stroke="#14d214" stroke-width="0.9" /><rect x="500.4" y="110.2" width="3.0" height="4.2" fill="#ffffff" stroke="#14d214" stroke-width=".8"/><path d="M507.0 112.2L507.0 115.3" stroke="#14d214" stroke-width="0.9" /><rect x="505.5" y="112.6" width="3.0" height="2.4" fill="#000000" stroke="#14d214" stroke-width=".8"/><path d="M512.0 109.0L512.0 114.7" stroke="#14d214" stroke-width="0.9" /><rect x="510.5" y="109.3" width="3.0" height="3.7" fill="#000000" stroke="#14d214" stroke-width=".8"/><path d="M517.1 106.5L517.1 115.0" stroke="#14d214" stroke-width="0.9" /><path d="M515.4 109.3L518.8 109.3" stroke="#14d214" stroke-width="1.1" /><path d="M163.6 206.5V207.5M168.7 206.5V207.8M173.7 206.5V208.1M178.8 206.5V208.5M183.8 206.5V208.8M188.8 206.5V209.1M193.9 206.5V209.4M198.9 206.5V209.8M204.0 206.5V210.1M209.0 206.5V210.4M214.1 206.5V210.7M219.1 206.5V211.1M224.2 206.5V211.4M229.2 206.5V211.7M234.3 206.5V211.1M239.3 206.5V210.5M244.4 206.5V209.9M249.4 206.5V209.3M254.5 206.5V208.7M259.6 206.5V208.1M264.6 206.5V207.5M269.6 206.5V206.9M274.7 206.5V205.9M279.8 206.5V204.6M284.8 206.5V202.6M289.9 206.5V200.6M294.9 206.5V198.6M299.9 206.5V196.9M305.0 206.5V196.1M310.0 206.5V195.3M315.1 206.5V194.5M320.1 206.5V193.8M325.2 206.5V193.3M330.2 206.5V192.8M335.3 206.5V192.3M340.4 206.5V191.8M345.4 206.5V192.2M350.4 206.5V192.6M355.5 206.5V192.9M360.5 206.5V193.3M365.6 206.5V193.7M370.6 206.5V194.1M375.7 206.5V194.4M380.8 206.5V194.8M385.8 206.5V195.2M390.9 206.5V195.4M395.9 206.5V194.6M400.9 206.5V193.9M406.0 206.5V193.2M411.0 206.5V192.6M416.1 206.5V192.7M421.1 206.5V192.7M426.2 206.5V192.8M431.2 206.5V192.8M436.3 206.5V192.9M441.4 206.5V192.9M446.4 206.5V193.0M451.4 206.5V193.6M456.5 206.5V194.2M461.5 206.5V194.8M466.6 206.5V195.4M471.6 206.5V196.0M476.7 206.5V196.6M481.8 206.5V197.3M486.8 206.5V198.2M491.9 206.5V199.1M496.9 206.5V200.1M501.9 206.5V201.0M507.0 206.5V202.2M512.0 206.5V203.3M517.1 206.5V204.4" stroke="#2f9a2f" stroke-width="1"/><path d="M163.0 202.6L185.0 204.5L205.0 208.0L225.0 210.6L245.0 211.7L262.0 210.4L280.0 206.7L300.0 201.0L320.0 196.6L340.0 194.0L370.0 193.2L420.0 193.4L450.0 193.3L470.0 194.0L490.0 196.0L505.0 198.0L518.0 200.0" fill="none" stroke="#d01818" stroke-width="1" /><path d="M163.0 231.5L178.0 235.0L196.0 236.0L212.0 233.5L230.0 228.0L250.0 221.5L268.0 220.5L286.0 218.6L300.0 220.6L318.0 222.8L336.0 221.6L344.0 225.0L354.0 235.5L364.0 235.5L380.0 224.0L396.0 220.5L408.0 219.0L418.0 221.5L428.0 225.8L440.0 227.0L450.0 227.6L462.0 224.5L473.0 220.5L486.0 220.6L493.0 228.0L500.0 235.5L508.0 236.5L518.0 234.0" fill="none" stroke="#2aa02a" stroke-width="0.9" /><path d="M163.0 233.0L180.0 236.0L200.0 237.0L215.0 235.0L235.0 229.0L255.0 222.2L275.0 221.0L290.0 219.0L305.0 221.5L322.0 223.5L340.0 222.5L348.0 226.0L360.0 236.6L370.0 233.0L385.0 222.5L400.0 221.0L412.0 219.6L422.0 222.0L431.0 226.4L445.0 227.5L453.0 228.0L465.0 225.0L476.0 221.0L489.0 221.0L496.0 227.0L503.0 234.3L510.0 236.0L518.0 235.0" fill="none" stroke="#d01818" stroke-width="0.9" /><path d="M163.0 260.3L185.0 263.0L205.0 264.8L240.0 262.6L250.0 257.0L270.0 253.5L290.0 247.9L340.0 247.4L350.0 258.0L360.0 258.0L375.0 252.4L390.0 256.0L403.6 251.3L412.0 252.4L426.0 255.8L450.0 254.5L470.0 252.4L487.0 252.0L496.0 259.0L505.0 260.3L516.7 259.2" fill="none" stroke="#2aa02a" stroke-width="0.9" /><path d="M163.0 270.5L172.6 262.6L198.6 272.8L204.0 262.6L218.0 267.0L223.5 259.2L229.0 265.5L234.8 259.0L239.4 263.7L245.0 247.9L265.4 243.3L270.0 247.4L285.7 242.2L303.8 245.6L310.6 258.7L320.0 251.3L340.0 243.0L345.7 265.5L350.0 268.2L365.0 258.0L373.0 246.7L378.5 254.7L390.0 256.0L396.8 260.3L403.6 245.2L408.0 246.7L417.0 258.0L426.0 264.8L436.4 254.2L442.0 258.0L451.0 253.5L456.7 259.2L467.0 247.4L472.6 252.9L482.8 247.4L487.3 247.9L490.7 263.7L496.3 270.5L502.0 273.2L507.6 268.2L516.7 259.2" fill="none" stroke="#d01818" stroke-width="0.9" /><path d="M165.3 87.2h4.4l-2.2 2.6z" fill="#e8e8e8"/><text xml:space="preserve" transform="translate(172.5 90.9) scale(0.890 1)" font-size="6.6" fill="#e8e8e8" text-anchor="start">EURUSD,H4  1.12977 1.13036 1.12854 1.12992</text><text xml:space="preserve" transform="translate(588.6 104.9) scale(0.915 1)" font-size="6.8" fill="#e8e8e8" text-anchor="start">1.13155</text><path d="M585.7 102.5L587.3 102.5" stroke="#d8d8d8" stroke-width="0.7" /><text xml:space="preserve" transform="translate(588.6 125.8) scale(0.915 1)" font-size="6.8" fill="#e8e8e8" text-anchor="start">1.12645</text><path d="M585.7 123.4L587.3 123.4" stroke="#d8d8d8" stroke-width="0.7" /><text xml:space="preserve" transform="translate(588.6 146.8) scale(0.915 1)" font-size="6.8" fill="#e8e8e8" text-anchor="start">1.12150</text><path d="M585.7 144.4L587.3 144.4" stroke="#d8d8d8" stroke-width="0.7" /><text xml:space="preserve" transform="translate(588.6 167.8) scale(0.935 1)" font-size="6.8" fill="#e8e8e8" text-anchor="start">1.11640</text><path d="M585.7 165.4L587.3 165.4" stroke="#d8d8d8" stroke-width="0.7" /><text xml:space="preserve" transform="translate(588.6 188.2) scale(0.955 1)" font-size="6.8" fill="#e8e8e8" text-anchor="start">1.11145</text><path d="M585.7 185.8L587.3 185.8" stroke="#d8d8d8" stroke-width="0.7" /><rect x="587.0" y="105.2" width="25.6" height="7.2" fill="#fff"/><text xml:space="preserve" transform="translate(588.6 111.2) scale(0.903 1)" font-size="6.8" fill="#000" text-anchor="start">1.12992</text><text xml:space="preserve" transform="translate(165.5 196.9) scale(0.899 1)" font-size="6.6" fill="#e8e8e8" text-anchor="start">MACD(12,26,9) 0.000580 0.001375</text><text xml:space="preserve" transform="translate(165.5 223.0) scale(0.882 1)" font-size="6.6" fill="#e8e8e8" text-anchor="start">Stoch(8,3,3) 22.3131 16.6069</text><text xml:space="preserve" transform="translate(165.5 248.8) scale(0.898 1)" font-size="6.6" fill="#e8e8e8" text-anchor="start">RSI(13) 49.0185  RSI(3) 47.4779</text><text xml:space="preserve" transform="translate(587.6 196.4) scale(0.952 1)" font-size="6.8" fill="#e8e8e8" text-anchor="start">0.003181</text><text xml:space="preserve" transform="translate(587.6 209.1) scale(0.945 1)" font-size="6.8" fill="#e8e8e8" text-anchor="start">0.00</text><text xml:space="preserve" transform="translate(587.6 212.3) scale(0.882 1)" font-size="6.8" fill="#e8e8e8" text-anchor="start">-0.001513</text><text xml:space="preserve" transform="translate(587.6 223.6) scale(0.767 1)" font-size="6.8" fill="#e8e8e8" text-anchor="start">80</text><text xml:space="preserve" transform="translate(588.6 223.6) scale(0.776 1)" font-size="6.8" fill="#e8e8e8" text-anchor="start">100</text><text xml:space="preserve" transform="translate(587.6 237.4) scale(0.767 1)" font-size="6.8" fill="#e8e8e8" text-anchor="start">20</text><text xml:space="preserve" transform="translate(589.6 237.4) scale(0.793 1)" font-size="6.8" fill="#e8e8e8" text-anchor="start">0</text><text xml:space="preserve" transform="translate(588.6 248.0) scale(0.776 1)" font-size="6.8" fill="#e8e8e8" text-anchor="start">100</text><text xml:space="preserve" transform="translate(588.6 254.4) scale(0.767 1)" font-size="6.8" fill="#e8e8e8" text-anchor="start">70</text><text xml:space="preserve" transform="translate(588.6 267.9) scale(0.767 1)" font-size="6.8" fill="#e8e8e8" text-anchor="start">30</text><text xml:space="preserve" transform="translate(588.6 274.0) scale(0.793 1)" font-size="6.8" fill="#e8e8e8" text-anchor="start">0</text><text xml:space="preserve" transform="translate(162.5 283.5) scale(0.860 1)" font-size="6.8" fill="#e8e8e8" text-anchor="start">28 May 2019</text><path d="M162.5 275.5L162.5 277.3" stroke="#d8d8d8" stroke-width="0.7" /><text xml:space="preserve" transform="translate(203.0 283.5) scale(0.860 1)" font-size="6.8" fill="#e8e8e8" text-anchor="start">30 May 00:00</text><path d="M203.0 275.5L203.0 277.3" stroke="#d8d8d8" stroke-width="0.7" /><text xml:space="preserve" transform="translate(243.4 283.5) scale(0.860 1)" font-size="6.8" fill="#e8e8e8" text-anchor="start">31 May 08:00</text><path d="M243.4 275.5L243.4 277.3" stroke="#d8d8d8" stroke-width="0.7" /><text xml:space="preserve" transform="translate(283.9 283.5) scale(0.860 1)" font-size="6.8" fill="#e8e8e8" text-anchor="start">3 Jun 16:00</text><path d="M283.9 275.5L283.9 277.3" stroke="#d8d8d8" stroke-width="0.7" /><text xml:space="preserve" transform="translate(324.3 283.5) scale(0.860 1)" font-size="6.8" fill="#e8e8e8" text-anchor="start">5 Jun 00:00</text><path d="M324.3 275.5L324.3 277.3" stroke="#d8d8d8" stroke-width="0.7" /><text xml:space="preserve" transform="translate(364.8 283.5) scale(0.860 1)" font-size="6.8" fill="#e8e8e8" text-anchor="start">6 Jun 08:00</text><path d="M364.8 275.5L364.8 277.3" stroke="#d8d8d8" stroke-width="0.7" /><text xml:space="preserve" transform="translate(405.3 283.5) scale(0.860 1)" font-size="6.8" fill="#e8e8e8" text-anchor="start">7 Jun 16:00</text><path d="M405.3 275.5L405.3 277.3" stroke="#d8d8d8" stroke-width="0.7" /><text xml:space="preserve" transform="translate(445.7 283.5) scale(0.860 1)" font-size="6.8" fill="#e8e8e8" text-anchor="start">11 Jun 00:00</text><path d="M445.7 275.5L445.7 277.3" stroke="#d8d8d8" stroke-width="0.7" /><text xml:space="preserve" transform="translate(486.2 283.5) scale(0.860 1)" font-size="6.8" fill="#e8e8e8" text-anchor="start">12 Jun 08:00</text><path d="M486.2 275.5L486.2 277.3" stroke="#d8d8d8" stroke-width="0.7" /><path d="M649.4 83.2V275.5M669.6 83.2V275.5M689.7 83.2V275.5M709.9 83.2V275.5M730.1 83.2V275.5M750.2 83.2V275.5M770.4 83.2V275.5M790.6 83.2V275.5M810.8 83.2V275.5M830.9 83.2V275.5M851.1 83.2V275.5M871.3 83.2V275.5M891.4 83.2V275.5M911.6 83.2V275.5M931.8 83.2V275.5M952.0 83.2V275.5M972.1 83.2V275.5M992.3 83.2V275.5M1012.5 83.2V275.5M1032.6 83.2V275.5M1052.8 83.2V275.5M628.4 106.9H1055.3M628.4 127.8H1055.3M628.4 148.7H1055.3M628.4 169.6H1055.3M628.4 190.5H1055.3M628.4 211.4H1055.3M628.4 232.3H1055.3M628.4 253.2H1055.3" stroke="#8794a2" stroke-width=".75" stroke-dasharray="2.1 1.8" fill="none"/><path d="M628.4 232.9L1055.3 232.9" stroke="#6f7c88" stroke-width="1" /><path d="M628.4 275.5V83.2H1055.3V275.5" fill="none" stroke="#d8d8d8" stroke-width=".8"/><path d="M628.4 275.5L1055.3 275.5" stroke="#d0d0d0" stroke-width="1" stroke-dasharray="1.2 1.2"/><path d="M629.4 102.4V105.3M628.2 104.7h1.2M629.4 104.1h1.2M631.9 103.2V104.9M630.7 104.1h1.2M631.9 104.5h1.2M634.5 100.9V105.5M633.3 104.5h1.2M634.5 101.3h1.2M637.0 94.8V106.4M635.8 101.3h1.2M637.0 97.7h1.2M639.5 92.6V103.0M638.3 97.7h1.2M639.5 100.7h1.2M642.0 97.9V116.0M640.8 100.7h1.2M642.0 110.1h1.2M644.6 108.8V115.3M643.4 110.1h1.2M644.6 114.4h1.2M647.1 109.4V117.7M645.9 114.4h1.2M647.1 112.2h1.2M649.6 106.4V114.8M648.4 112.2h1.2M649.6 110.4h1.2M652.1 109.2V113.2M650.9 110.4h1.2M652.1 111.8h1.2M654.7 108.9V118.2M653.5 111.8h1.2M654.7 115.9h1.2M657.2 113.9V129.5M656.0 115.9h1.2M657.2 128.0h1.2M659.7 127.3V132.2M658.5 128.0h1.2M659.7 130.8h1.2M662.3 127.3V133.8M661.1 130.8h1.2M662.3 132.1h1.2M664.8 130.9V133.6M663.6 132.1h1.2M664.8 133.0h1.2M667.3 128.2V137.5M666.1 133.0h1.2M667.3 130.4h1.2M669.8 126.7V136.5M668.6 130.4h1.2M669.8 131.2h1.2M672.4 127.9V139.7M671.2 131.2h1.2M672.4 135.4h1.2M674.9 133.6V144.0M673.7 135.4h1.2M674.9 135.4h1.2M677.4 128.3V141.4M676.2 135.4h1.2M677.4 129.6h1.2M679.9 123.4V134.7M678.7 129.6h1.2M679.9 129.3h1.2M682.5 125.2V131.9M681.3 129.3h1.2M682.5 130.0h1.2M685.0 128.8V133.2M683.8 130.0h1.2M685.0 132.2h1.2M687.5 124.9V133.7M686.3 132.2h1.2M687.5 125.9h1.2M690.0 117.4V128.3M688.8 125.9h1.2M690.0 126.0h1.2M692.6 122.9V133.1M691.4 126.0h1.2M692.6 129.9h1.2M695.1 125.3V134.2M693.9 129.9h1.2M695.1 130.9h1.2M697.6 130.0V132.1M696.4 130.9h1.2M697.6 131.2h1.2M700.2 129.4V134.3M699.0 131.2h1.2M700.2 129.8h1.2M702.7 121.2V132.0M701.5 129.8h1.2M702.7 126.4h1.2M705.2 124.0V140.4M704.0 126.4h1.2M705.2 139.1h1.2M707.7 135.0V152.6M706.5 139.1h1.2M707.7 148.0h1.2M710.3 138.7V151.6M709.1 148.0h1.2M710.3 145.1h1.2M712.8 144.0V147.0M711.6 145.1h1.2M712.8 146.0h1.2M715.3 144.2V150.1M714.1 146.0h1.2M715.3 149.3h1.2M717.8 149.1V154.1M716.6 149.3h1.2M717.8 153.6h1.2M720.4 150.6V158.8M719.2 153.6h1.2M720.4 158.0h1.2M722.9 156.9V161.9M721.7 158.0h1.2M722.9 160.4h1.2M725.4 158.0V162.4M724.2 160.4h1.2M725.4 161.5h1.2M728.0 158.8V163.2M726.8 161.5h1.2M728.0 161.3h1.2M730.5 156.0V164.0M729.3 161.3h1.2M730.5 159.2h1.2M733.0 157.1V172.3M731.8 159.2h1.2M733.0 171.2h1.2M735.5 170.1V182.6M734.3 171.2h1.2M735.5 179.9h1.2M738.1 177.7V184.2M736.9 179.9h1.2M738.1 180.1h1.2M740.6 177.3V184.4M739.4 180.1h1.2M740.6 179.9h1.2M743.1 177.8V183.0M741.9 179.9h1.2M743.1 180.0h1.2M745.6 177.6V184.6M744.4 180.0h1.2M745.6 181.6h1.2M748.2 178.6V196.2M747.0 181.6h1.2M748.2 193.2h1.2M750.7 192.1V200.2M749.5 193.2h1.2M750.7 198.1h1.2M753.2 196.5V200.0M752.0 198.1h1.2M753.2 198.9h1.2M755.8 192.0V202.0M754.5 198.9h1.2M755.8 197.8h1.2M758.3 193.4V203.0M757.1 197.8h1.2M758.3 201.0h1.2M760.8 198.1V202.5M759.6 201.0h1.2M760.8 200.0h1.2M763.3 194.9V208.0M762.1 200.0h1.2M763.3 204.7h1.2M765.9 203.3V218.6M764.7 204.7h1.2M765.9 213.2h1.2M768.4 207.1V224.2M767.2 213.2h1.2M768.4 220.0h1.2M770.9 212.5V226.5M769.7 220.0h1.2M770.9 215.7h1.2M773.4 213.3V220.0M772.2 215.7h1.2M773.4 216.5h1.2M776.0 211.1V217.3M774.8 216.5h1.2M776.0 212.0h1.2M778.5 208.2V214.4M777.3 212.0h1.2M778.5 213.3h1.2M781.0 210.1V221.7M779.8 213.3h1.2M781.0 219.8h1.2M783.5 218.7V222.8M782.3 219.8h1.2M783.5 219.2h1.2M786.1 218.0V221.7M784.9 219.2h1.2M786.1 219.8h1.2M788.6 215.7V220.9M787.4 219.8h1.2M788.6 218.8h1.2M791.1 216.2V226.4M789.9 218.8h1.2M791.1 222.7h1.2M793.7 217.3V224.1M792.5 222.7h1.2M793.7 220.2h1.2M796.2 191.4V223.4M795.0 220.2h1.2M796.2 217.3h1.2M798.7 214.4V227.9M797.5 217.3h1.2M798.7 222.3h1.2M801.2 220.9V227.1M800.0 222.3h1.2M801.2 223.8h1.2M803.8 221.4V227.1M802.6 223.8h1.2M803.8 224.2h1.2M806.3 222.2V231.8M805.1 224.2h1.2M806.3 229.0h1.2M808.8 225.7V239.0M807.6 229.0h1.2M808.8 236.3h1.2M811.3 234.4V249.5M810.1 236.3h1.2M811.3 237.8h1.2M813.9 232.2V238.9M812.7 237.8h1.2M813.9 233.9h1.2M816.4 232.8V242.1M815.2 233.9h1.2M816.4 240.8h1.2M818.9 239.1V245.5M817.7 240.8h1.2M818.9 243.4h1.2M821.5 240.8V256.1M820.3 243.4h1.2M821.5 245.5h1.2M824.0 239.6V249.7M822.8 245.5h1.2M824.0 243.9h1.2M826.5 234.2V244.9M825.3 243.9h1.2M826.5 235.2h1.2M829.0 233.8V239.0M827.8 235.2h1.2M829.0 238.0h1.2M831.6 234.3V243.1M830.4 238.0h1.2M831.6 238.9h1.2M834.1 232.6V242.3M832.9 238.9h1.2M834.1 238.0h1.2M836.6 230.3V239.1M835.4 238.0h1.2M836.6 233.8h1.2M839.1 226.3V235.0M837.9 233.8h1.2M839.1 230.4h1.2M841.7 225.3V232.2M840.5 230.4h1.2M841.7 226.3h1.2M844.2 218.6V228.2M843.0 226.3h1.2M844.2 220.9h1.2M846.7 217.2V223.6M845.5 220.9h1.2M846.7 217.8h1.2M849.2 216.3V218.9M848.0 217.8h1.2M849.2 217.2h1.2M851.8 211.4V220.3M850.6 217.2h1.2M851.8 218.4h1.2M854.3 218.0V231.4M853.1 218.4h1.2M854.3 230.7h1.2M856.8 229.4V235.3M855.6 230.7h1.2M856.8 234.5h1.2M859.4 226.5V237.1M858.2 234.5h1.2M859.4 233.0h1.2M861.9 228.4V237.4M860.7 233.0h1.2M861.9 232.1h1.2M864.4 230.2V232.7M863.2 232.1h1.2M864.4 231.9h1.2M866.9 225.7V235.9M865.7 231.9h1.2M866.9 232.8h1.2M869.5 231.5V237.3M868.3 232.8h1.2M869.5 236.7h1.2M872.0 235.0V237.5M870.8 236.7h1.2M872.0 236.1h1.2M874.5 233.0V239.9M873.3 236.1h1.2M874.5 239.2h1.2M877.0 237.2V241.4M875.8 239.2h1.2M877.0 240.7h1.2M879.6 235.9V243.3M878.4 240.7h1.2M879.6 239.0h1.2M882.1 236.4V241.1M880.9 239.0h1.2M882.1 239.9h1.2M884.6 237.8V241.5M883.4 239.9h1.2M884.6 241.2h1.2M887.2 237.6V247.9M886.0 241.2h1.2M887.2 246.2h1.2M889.7 245.3V254.1M888.5 246.2h1.2M889.7 250.3h1.2M892.2 246.6V254.4M891.0 250.3h1.2M892.2 249.4h1.2M894.7 246.1V254.5M893.5 249.4h1.2M894.7 250.0h1.2M897.3 242.0V251.8M896.1 250.0h1.2M897.3 247.9h1.2M899.8 246.1V253.0M898.6 247.9h1.2M899.8 252.8h1.2M902.3 250.5V264.3M901.1 252.8h1.2M902.3 254.6h1.2M904.8 249.8V257.8M903.6 254.6h1.2M904.8 253.9h1.2M907.4 251.2V254.7M906.2 253.9h1.2M907.4 254.1h1.2M909.9 251.1V255.7M908.7 254.1h1.2M909.9 253.4h1.2M912.4 251.0V255.5M911.2 253.4h1.2M912.4 254.6h1.2M915.0 253.1V270.5M913.8 254.6h1.2M915.0 262.6h1.2M917.5 252.4V267.3M916.3 262.6h1.2M917.5 254.0h1.2M920.0 246.4V255.7M918.8 254.0h1.2M920.0 246.8h1.2M922.5 244.0V247.5M921.3 246.8h1.2M922.5 244.8h1.2M925.1 242.2V248.4M923.9 244.8h1.2M925.1 242.9h1.2M927.6 240.3V247.8M926.4 242.9h1.2M927.6 245.0h1.2M930.1 241.4V252.8M928.9 245.0h1.2M930.1 249.4h1.2M932.6 241.9V252.5M931.4 249.4h1.2M932.6 245.4h1.2M935.2 230.8V250.6M934.0 245.4h1.2M935.2 237.9h1.2M937.7 236.5V243.0M936.5 237.9h1.2M937.7 239.6h1.2M940.2 235.4V240.9M939.0 239.6h1.2M940.2 237.2h1.2M942.7 229.7V243.5M941.5 237.2h1.2M942.7 238.2h1.2M945.3 231.5V239.1M944.1 238.2h1.2M945.3 231.9h1.2M947.8 224.9V235.0M946.6 231.9h1.2M947.8 227.7h1.2M950.3 224.7V230.4M949.1 227.7h1.2M950.3 227.2h1.2M952.9 224.3V228.4M951.7 227.2h1.2M952.9 225.9h1.2M955.4 220.7V232.0M954.2 225.9h1.2M955.4 225.2h1.2M957.9 220.6V225.9M956.7 225.2h1.2M957.9 222.3h1.2M960.4 216.7V225.9M959.2 222.3h1.2M960.4 219.5h1.2M963.0 218.7V226.1M961.8 219.5h1.2M963.0 221.8h1.2M965.5 220.5V229.9M964.3 221.8h1.2M965.5 228.4h1.2M968.0 227.0V231.9M966.8 228.4h1.2M968.0 229.4h1.2M970.5 225.7V232.7M969.3 229.4h1.2M970.5 232.0h1.2M973.1 225.0V232.9M971.9 232.0h1.2M973.1 229.5h1.2M975.6 213.3V234.0M974.4 229.5h1.2M975.6 221.1h1.2M978.1 217.5V227.2M976.9 221.1h1.2M978.1 222.7h1.2M980.7 218.1V232.0M979.5 222.7h1.2M980.7 227.7h1.2M983.2 226.9V230.8M982.0 227.7h1.2M983.2 228.2h1.2M985.7 226.1V234.5M984.5 228.2h1.2M985.7 230.2h1.2M988.2 223.1V230.7M987.0 230.2h1.2M988.2 224.4h1.2M990.8 213.5V228.3M989.6 224.4h1.2M990.8 214.6h1.2M993.3 207.0V215.2M992.1 214.6h1.2M993.3 211.3h1.2M995.8 209.2V216.9M994.6 211.3h1.2M995.8 215.8h1.2M998.3 211.8V223.2M997.1 215.8h1.2M998.3 220.3h1.2M1000.9 218.3V221.5M999.7 220.3h1.2M1000.9 220.5h1.2M1003.4 216.9V228.5M1002.2 220.5h1.2M1003.4 224.5h1.2M1005.9 221.8V241.9M1004.7 224.5h1.2M1005.9 231.2h1.2M1008.5 230.4V234.6M1007.2 231.2h1.2M1008.5 232.5h1.2M1011.0 230.4V233.5M1009.8 232.5h1.2M1011.0 231.3h1.2M1013.5 229.4V231.7M1012.3 231.3h1.2M1013.5 230.2h1.2M1016.0 222.8V234.4M1014.8 230.2h1.2M1016.0 231.8h1.2M1018.6 225.7V236.6M1017.4 231.8h1.2M1018.6 228.1h1.2M1021.1 219.5V231.9M1019.9 228.1h1.2M1021.1 223.6h1.2M1023.6 217.8V228.1M1022.4 223.6h1.2M1023.6 221.4h1.2M1026.1 213.9V226.5M1024.9 221.4h1.2M1026.1 217.6h1.2M1028.7 215.1V224.3M1027.5 217.6h1.2M1028.7 220.1h1.2M1031.2 218.1V223.0M1030.0 220.1h1.2M1031.2 221.5h1.2M1033.7 210.8V226.9M1032.5 221.5h1.2M1033.7 216.8h1.2M1036.2 208.6V219.1M1035.0 216.8h1.2M1036.2 212.4h1.2M1038.8 213.3V232.4M1037.6 212.4h1.2M1038.8 223.9h1.2M1041.3 221.2V232.8M1040.1 223.9h1.2M1041.3 230.4h1.2M1043.8 226.9V233.2M1042.6 230.4h1.2M1043.8 229.1h1.2M1046.4 227.6V229.8M1045.2 229.1h1.2M1046.4 229.1h1.2M1048.9 225.3V239.6M1047.7 229.1h1.2M1048.9 231.5h1.2" stroke="#14d214" stroke-width="1.1" fill="none"/><path d="M628.9 108.8L635.5 104.0L641.2 102.5L646.0 101.2L648.8 102.1L654.6 108.8L664.1 117.4L673.6 124.0L683.1 129.2L688.8 131.1L696.4 131.3L704.1 131.1L711.7 134.1L721.2 140.2L728.8 146.9L736.4 156.4L744.0 165.0L751.6 175.4L759.3 185.9L766.0 193.3L773.6 202.8L781.2 209.5L788.8 214.3L796.5 218.1L804.1 220.9L811.7 225.7L819.3 230.4L826.9 234.2L832.6 237.1L838.3 239.0L844.1 236.1L849.8 233.3L855.5 231.4L861.2 230.4L868.8 229.7L874.5 230.8L880.2 232.7L885.9 236.5L891.6 240.0L899.3 243.8L906.9 247.6L906.0 247.5L910.8 249.9L915.5 252.3L920.3 253.1L926.6 251.5L933.0 250.7L937.8 248.6L944.1 245.9L950.5 241.1L956.8 236.4L961.6 233.2L966.3 231.1L972.7 229.5L979.1 227.3L985.4 227.0L991.8 226.1L998.1 224.5L1004.5 223.8L1010.8 224.9L1017.2 225.7L1023.5 224.9L1029.9 225.7L1036.2 224.8L1042.6 224.5L1046.5 223.7L1048.1 224.5" fill="none" stroke="#d01818" stroke-width="1" /><path d="M630.8 87.2h4.4l-2.2 2.6z" fill="#e8e8e8"/><text xml:space="preserve" transform="translate(638.5 90.9) scale(0.890 1)" font-size="6.6" fill="#e8e8e8" text-anchor="start">GBPUSD,H4  1.26906 1.26962 1.26619 1.26803</text><rect x="1057" y="229.3" width="6" height="7.2" fill="#fff"/><text xml:space="preserve" transform="translate(628.6 283.5) scale(0.860 1)" font-size="6.8" fill="#e8e8e8" text-anchor="start">6 May 2019</text><path d="M628.6 275.5L628.6 277.3" stroke="#d8d8d8" stroke-width="0.7" /><text xml:space="preserve" transform="translate(668.9 283.5) scale(0.860 1)" font-size="6.8" fill="#e8e8e8" text-anchor="start">9 May 08:00</text><path d="M668.9 275.5L668.9 277.3" stroke="#d8d8d8" stroke-width="0.7" /><text xml:space="preserve" transform="translate(709.2 283.5) scale(0.860 1)" font-size="6.8" fill="#e8e8e8" text-anchor="start">14 May 00:00</text><path d="M709.2 275.5L709.2 277.3" stroke="#d8d8d8" stroke-width="0.7" /><text xml:space="preserve" transform="translate(749.6 283.5) scale(0.860 1)" font-size="6.8" fill="#e8e8e8" text-anchor="start">16 May 16:00</text><path d="M749.6 275.5L749.6 277.3" stroke="#d8d8d8" stroke-width="0.7" /><text xml:space="preserve" transform="translate(789.9 283.5) scale(0.860 1)" font-size="6.8" fill="#e8e8e8" text-anchor="start">21 May 08:00</text><path d="M789.9 275.5L789.9 277.3" stroke="#d8d8d8" stroke-width="0.7" /><text xml:space="preserve" transform="translate(830.2 283.5) scale(0.860 1)" font-size="6.8" fill="#e8e8e8" text-anchor="start">24 May 00:00</text><path d="M830.2 275.5L830.2 277.3" stroke="#d8d8d8" stroke-width="0.7" /><text xml:space="preserve" transform="translate(870.5 283.5) scale(0.860 1)" font-size="6.8" fill="#e8e8e8" text-anchor="start">28 May 16:00</text><path d="M870.5 275.5L870.5 277.3" stroke="#d8d8d8" stroke-width="0.7" /><text xml:space="preserve" transform="translate(910.8 283.5) scale(0.860 1)" font-size="6.8" fill="#e8e8e8" text-anchor="start">31 May 08:00</text><path d="M910.8 275.5L910.8 277.3" stroke="#d8d8d8" stroke-width="0.7" /><text xml:space="preserve" transform="translate(951.2 283.5) scale(0.860 1)" font-size="6.8" fill="#e8e8e8" text-anchor="start">5 Jun 00:00</text><path d="M951.2 275.5L951.2 277.3" stroke="#d8d8d8" stroke-width="0.7" /><text xml:space="preserve" transform="translate(991.5 283.5) scale(0.860 1)" font-size="6.8" fill="#e8e8e8" text-anchor="start">7 Jun 16:00</text><path d="M991.5 275.5L991.5 277.3" stroke="#d8d8d8" stroke-width="0.7" /><text xml:space="preserve" transform="translate(1031.8 283.5) scale(0.860 1)" font-size="6.8" fill="#e8e8e8" text-anchor="start">12 Jun 08:00</text><path d="M1031.8 275.5L1031.8 277.3" stroke="#d8d8d8" stroke-width="0.7" /><path d="M179.6 317.2V445.5M199.8 317.2V445.5M220.0 317.2V445.5M240.2 317.2V445.5M260.4 317.2V445.5M280.6 317.2V445.5M300.8 317.2V445.5M321.0 317.2V445.5M341.2 317.2V445.5M361.4 317.2V445.5M381.6 317.2V445.5M401.8 317.2V445.5M422.0 317.2V445.5M442.2 317.2V445.5M462.4 317.2V445.5M482.6 317.2V445.5M502.8 317.2V445.5M523.0 317.2V445.5M543.2 317.2V445.5M563.4 317.2V445.5M583.6 317.2V445.5M158.8 338.9H585.5M158.8 359.8H585.5M158.8 380.6H585.5M158.8 401.4H585.5M158.8 422.4H585.5M158.8 443.2H585.5" stroke="#8794a2" stroke-width=".75" stroke-dasharray="2.1 1.8" fill="none"/><path d="M179.6 447.0V483.0M199.8 447.0V483.0M220.0 447.0V483.0M240.2 447.0V483.0M260.4 447.0V483.0M280.6 447.0V483.0M300.8 447.0V483.0M321.0 447.0V483.0M341.2 447.0V483.0M361.4 447.0V483.0M381.6 447.0V483.0M401.8 447.0V483.0M422.0 447.0V483.0M442.2 447.0V483.0M462.4 447.0V483.0M482.6 447.0V483.0M502.8 447.0V483.0M523.0 447.0V483.0M543.2 447.0V483.0M563.4 447.0V483.0M583.6 447.0V483.0M158.8 458.3H585.5" stroke="#8794a2" stroke-width=".75" stroke-dasharray="2.1 1.8" fill="none"/><path d="M158.8 417.2L585.5 417.2" stroke="#7b8894" stroke-width="1" /><path d="M158.8 483V317.2H585.5V483" fill="none" stroke="#d8d8d8" stroke-width=".8"/><path d="M158.8 445.8L585.5 445.8" stroke="#c8c8c8" stroke-width="1.7" /><path d="M497.3 317.3h4.4l-2.2 2.6z" fill="#b8c0c8"/><path d="M159.4 327.6V336.9M158.2 332.5h1.2M159.4 332.4h1.2M161.9 330.7V336.9M160.7 332.4h1.2M161.9 332.3h1.2M164.5 326.5V333.4M163.3 332.3h1.2M164.5 331.0h1.2M167.0 326.5V332.7M165.8 331.0h1.2M167.0 327.6h1.2M169.5 321.2V332.9M168.3 327.6h1.2M169.5 326.6h1.2M172.0 322.0V330.2M170.8 326.6h1.2M172.0 325.8h1.2M174.6 324.9V326.3M173.4 325.8h1.2M174.6 325.2h1.2M177.1 323.7V330.8M175.9 325.2h1.2M177.1 330.0h1.2M179.6 328.1V337.2M178.4 330.0h1.2M179.6 334.9h1.2M182.1 333.5V349.7M180.9 334.9h1.2M182.1 344.7h1.2M184.7 338.0V349.4M183.5 344.7h1.2M184.7 343.5h1.2M187.2 340.2V345.9M186.0 343.5h1.2M187.2 343.5h1.2M189.7 338.2V346.1M188.5 343.5h1.2M189.7 342.6h1.2M192.3 341.8V348.0M191.1 342.6h1.2M192.3 347.4h1.2M194.8 346.4V357.7M193.6 347.4h1.2M194.8 354.6h1.2M197.3 350.7V356.0M196.1 354.6h1.2M197.3 354.0h1.2M199.8 351.3V355.4M198.6 354.0h1.2M199.8 353.9h1.2M202.4 350.6V358.8M201.2 353.9h1.2M202.4 357.8h1.2M204.9 356.4V358.8M203.7 357.8h1.2M204.9 356.6h1.2M207.4 352.3V363.9M206.2 356.6h1.2M207.4 360.3h1.2M209.9 354.6V371.3M208.7 360.3h1.2M209.9 367.8h1.2M212.5 365.8V374.1M211.3 367.8h1.2M212.5 372.8h1.2M215.0 370.7V377.9M213.8 372.8h1.2M215.0 373.0h1.2M217.5 368.2V375.8M216.3 373.0h1.2M217.5 372.4h1.2M220.0 370.5V373.0M218.8 372.4h1.2M220.0 372.4h1.2M222.6 367.0V374.5M221.4 372.4h1.2M222.6 369.2h1.2M225.1 365.3V370.5M223.9 369.2h1.2M225.1 365.9h1.2M227.6 361.9V368.1M226.4 365.9h1.2M227.6 363.8h1.2M230.2 360.2V365.9M229.0 363.8h1.2M230.2 364.9h1.2M232.7 363.1V371.5M231.5 364.9h1.2M232.7 364.9h1.2M235.2 362.3V367.6M234.0 364.9h1.2M235.2 366.7h1.2M237.7 365.1V375.8M236.5 366.7h1.2M237.7 368.1h1.2M240.3 367.0V370.1M239.1 368.1h1.2M240.3 369.2h1.2M242.8 358.1V371.0M241.6 369.2h1.2M242.8 363.4h1.2M245.3 361.3V368.1M244.1 363.4h1.2M245.3 364.2h1.2M247.8 362.7V369.7M246.6 364.2h1.2M247.8 365.6h1.2M250.4 363.6V367.9M249.2 365.6h1.2M250.4 365.4h1.2M252.9 364.7V367.4M251.7 365.4h1.2M252.9 365.7h1.2M255.4 359.2V366.6M254.2 365.7h1.2M255.4 359.6h1.2M258.0 358.6V360.4M256.8 359.6h1.2M258.0 359.1h1.2M260.5 358.4V361.3M259.3 359.1h1.2M260.5 360.5h1.2M263.0 357.6V363.9M261.8 360.5h1.2M263.0 360.8h1.2M265.5 358.7V365.1M264.3 360.8h1.2M265.5 362.0h1.2M268.1 358.9V366.4M266.9 362.0h1.2M268.1 362.3h1.2M270.6 356.5V363.6M269.4 362.3h1.2M270.6 357.8h1.2M273.1 353.1V358.5M271.9 357.8h1.2M273.1 355.8h1.2M275.6 354.7V365.1M274.4 355.8h1.2M275.6 358.4h1.2M278.2 355.0V361.5M277.0 358.4h1.2M278.2 357.8h1.2M280.7 351.0V359.1M279.5 357.8h1.2M280.7 354.8h1.2M283.2 353.2V359.5M282.0 354.8h1.2M283.2 358.3h1.2M285.8 356.4V363.7M284.6 358.3h1.2M285.8 363.1h1.2M288.3 361.9V365.3M287.1 363.1h1.2M288.3 363.5h1.2M290.8 360.5V372.5M289.6 363.5h1.2M290.8 365.8h1.2M293.3 361.3V369.4M292.1 365.8h1.2M293.3 363.4h1.2M295.9 359.3V366.9M294.7 363.4h1.2M295.9 360.1h1.2M298.4 354.1V360.9M297.2 360.1h1.2M298.4 357.3h1.2M300.9 350.7V362.4M299.7 357.3h1.2M300.9 360.0h1.2M303.4 356.2V362.7M302.2 360.0h1.2M303.4 357.3h1.2M306.0 354.3V359.9M304.8 357.3h1.2M306.0 357.7h1.2M308.5 355.7V359.3M307.3 357.7h1.2M308.5 357.9h1.2M311.0 353.6V359.4M309.8 357.9h1.2M311.0 356.6h1.2M313.5 355.3V359.2M312.3 356.6h1.2M313.5 358.2h1.2M316.1 356.8V365.0M314.9 358.2h1.2M316.1 363.2h1.2M318.6 362.5V366.5M317.4 363.2h1.2M318.6 364.7h1.2M321.1 362.8V367.2M319.9 364.7h1.2M321.1 364.7h1.2M323.7 358.4V371.7M322.5 364.7h1.2M323.7 364.6h1.2M326.2 362.4V365.2M325.0 364.6h1.2M326.2 364.0h1.2M328.7 358.7V368.5M327.5 364.0h1.2M328.7 364.1h1.2M331.2 363.3V366.3M330.0 364.1h1.2M331.2 365.0h1.2M333.8 363.5V378.1M332.6 365.0h1.2M333.8 377.5h1.2M336.3 375.6V383.7M335.1 377.5h1.2M336.3 383.3h1.2M338.8 377.0V387.8M337.6 383.3h1.2M338.8 380.8h1.2M341.3 378.7V388.3M340.1 380.8h1.2M341.3 382.3h1.2M343.9 381.4V387.5M342.7 382.3h1.2M343.9 383.7h1.2M346.4 382.6V387.6M345.2 383.7h1.2M346.4 384.9h1.2M348.9 381.8V392.0M347.7 384.9h1.2M348.9 386.5h1.2M351.5 380.0V388.5M350.3 386.5h1.2M351.5 387.1h1.2M354.0 383.8V391.5M352.8 387.1h1.2M354.0 387.8h1.2M356.5 382.4V389.0M355.3 387.8h1.2M356.5 383.2h1.2M359.0 375.9V386.2M357.8 383.2h1.2M359.0 378.2h1.2M361.6 369.7V384.0M360.4 378.2h1.2M361.6 376.0h1.2M364.1 375.4V381.5M362.9 376.0h1.2M364.1 379.8h1.2M366.6 377.3V384.5M365.4 379.8h1.2M366.6 381.0h1.2M369.1 372.9V384.1M367.9 381.0h1.2M369.1 379.2h1.2M371.7 375.4V381.2M370.5 379.2h1.2M371.7 377.2h1.2M374.2 376.6V379.8M373.0 377.2h1.2M374.2 378.1h1.2M376.7 375.2V378.9M375.5 378.1h1.2M376.7 375.7h1.2M379.2 364.6V379.0M378.0 375.7h1.2M379.2 366.4h1.2M381.8 361.7V371.9M380.6 366.4h1.2M381.8 368.0h1.2M384.3 365.3V374.3M383.1 368.0h1.2M384.3 371.3h1.2M386.8 368.8V374.1M385.6 371.3h1.2M386.8 372.5h1.2M389.4 370.6V378.0M388.2 372.5h1.2M389.4 373.9h1.2M391.9 372.0V375.8M390.7 373.9h1.2M391.9 373.7h1.2M394.4 368.0V378.4M393.2 373.7h1.2M394.4 369.6h1.2M396.9 366.8V372.7M395.7 369.6h1.2M396.9 368.8h1.2M399.5 366.7V370.0M398.3 368.8h1.2M399.5 367.8h1.2M402.0 365.3V368.6M400.8 367.8h1.2M402.0 366.4h1.2M404.5 364.9V367.5M403.3 366.4h1.2M404.5 366.2h1.2M407.0 360.3V371.2M405.8 366.2h1.2M407.0 363.1h1.2M409.6 361.6V369.4M408.4 363.1h1.2M409.6 367.1h1.2M412.1 363.3V371.3M410.9 367.1h1.2M412.1 367.4h1.2M414.6 365.2V374.6M413.4 367.4h1.2M414.6 373.1h1.2M417.2 372.1V378.1M416.0 373.1h1.2M417.2 374.7h1.2M419.7 373.6V375.2M418.5 374.7h1.2M419.7 374.4h1.2M422.2 371.3V379.2M421.0 374.4h1.2M422.2 374.4h1.2M424.7 369.9V386.9M423.5 374.4h1.2M424.7 380.7h1.2M427.3 378.6V392.2M426.1 380.7h1.2M427.3 388.0h1.2M429.8 385.1V396.4M428.6 388.0h1.2M429.8 392.8h1.2M432.3 391.2V401.3M431.1 392.8h1.2M432.3 397.6h1.2M434.8 395.9V403.0M433.6 397.6h1.2M434.8 399.7h1.2M437.4 397.0V402.3M436.2 399.7h1.2M437.4 398.1h1.2M439.9 396.7V400.5M438.7 398.1h1.2M439.9 399.2h1.2M442.4 402.7V415.5M441.2 399.2h1.2M442.4 414.5h1.2M445.0 413.7V417.7M443.8 414.5h1.2M445.0 417.1h1.2M447.5 413.2V419.1M446.3 417.1h1.2M447.5 416.8h1.2M450.0 413.9V419.1M448.8 416.8h1.2M450.0 414.9h1.2M452.5 412.7V416.2M451.3 414.9h1.2M452.5 413.3h1.2M455.1 412.4V418.2M453.9 413.3h1.2M455.1 415.8h1.2M457.6 410.4V422.9M456.4 415.8h1.2M457.6 418.3h1.2M460.1 417.4V420.8M458.9 418.3h1.2M460.1 420.1h1.2M462.6 415.1V423.4M461.4 420.1h1.2M462.6 420.5h1.2M465.2 419.9V423.0M464.0 420.5h1.2M465.2 421.4h1.2M467.7 419.9V441.9M466.5 421.4h1.2M467.7 428.3h1.2M470.2 422.1V437.7M469.0 428.3h1.2M470.2 422.9h1.2M472.7 409.9V425.0M471.5 422.9h1.2M472.7 412.3h1.2M475.3 410.4V412.6M474.1 412.3h1.2M475.3 411.7h1.2M477.8 409.5V415.0M476.6 411.7h1.2M477.8 411.7h1.2M480.3 409.4V412.4M479.1 411.7h1.2M480.3 411.6h1.2M482.9 405.7V417.8M481.7 411.6h1.2M482.9 414.3h1.2M485.4 407.5V432.6M484.2 414.3h1.2M485.4 424.2h1.2M487.9 417.4V428.7M486.7 424.2h1.2M487.9 422.8h1.2M490.4 419.9V424.3M489.2 422.8h1.2M490.4 421.4h1.2M493.0 420.4V423.6M491.8 421.4h1.2M493.0 421.9h1.2M495.5 415.2V425.3M494.3 421.9h1.2M495.5 418.6h1.2M498.0 408.8V438.8M496.8 418.6h1.2M498.0 420.1h1.2M500.5 419.9V439.8M499.3 420.1h1.2M500.5 432.5h1.2M503.1 431.6V436.7M501.9 432.5h1.2M503.1 434.7h1.2M505.6 427.0V437.6M504.4 434.7h1.2M505.6 428.7h1.2M508.1 423.3V431.8M506.9 428.7h1.2M508.1 424.3h1.2M510.7 420.7V427.0M509.5 424.3h1.2M510.7 423.2h1.2M513.2 422.8V425.0M512.0 423.2h1.2M513.2 424.6h1.2M515.7 422.6V425.8M514.5 424.6h1.2M515.7 425.1h1.2M518.2 424.6V429.0M517.0 425.1h1.2M518.2 427.5h1.2M520.8 424.2V429.9M519.6 427.5h1.2M520.8 426.8h1.2M523.3 422.1V429.1M522.1 426.8h1.2M523.3 428.0h1.2M525.8 423.3V432.6M524.6 428.0h1.2M525.8 424.7h1.2M528.3 417.9V426.5M527.1 424.7h1.2M528.3 418.8h1.2M530.9 415.9V420.9M529.7 418.8h1.2M530.9 418.9h1.2M533.4 414.9V422.4M532.2 418.9h1.2M533.4 420.4h1.2M535.9 417.1V423.6M534.7 420.4h1.2M535.9 419.2h1.2M538.5 416.7V422.2M537.2 419.2h1.2M538.5 420.7h1.2M541.0 420.1V426.1M539.8 420.7h1.2M541.0 422.7h1.2M543.5 412.7V428.3M542.3 422.7h1.2M543.5 414.5h1.2M546.0 406.2V415.2M544.8 414.5h1.2M546.0 409.4h1.2M548.6 408.7V414.0M547.4 409.4h1.2M548.6 410.1h1.2M551.1 407.2V413.4M549.9 410.1h1.2M551.1 408.7h1.2M553.6 406.4V410.1M552.4 408.7h1.2M553.6 408.2h1.2M556.1 406.0V417.1M554.9 408.2h1.2M556.1 410.8h1.2" stroke="#14d214" stroke-width="1.1" fill="none"/><path d="M159.4 458.3V457.1M161.9 458.3V456.8M164.5 458.3V456.4M167.0 458.3V456.1M169.5 458.3V456.2M172.0 458.3V456.2M174.6 458.3V456.2M177.1 458.3V456.3M179.6 458.3V457.2M182.1 458.3V460.5M184.7 458.3V463.1M187.2 458.3V465.7M189.7 458.3V468.4M192.3 458.3V471.0M194.8 458.3V473.6M197.3 458.3V476.3M199.8 458.3V478.9M202.4 458.3V481.5M204.9 458.3V482.8M207.4 458.3V482.8M209.9 458.3V482.8M212.5 458.3V482.8M215.0 458.3V482.8M217.5 458.3V482.8M220.0 458.3V482.8M222.6 458.3V482.8M225.1 458.3V482.8M227.6 458.3V482.8M230.2 458.3V482.8M232.7 458.3V482.8M235.2 458.3V482.8M237.7 458.3V482.8M240.3 458.3V482.8M242.8 458.3V482.8M245.3 458.3V482.8M247.8 458.3V480.9M250.4 458.3V478.9M252.9 458.3V476.8M255.4 458.3V474.8M258.0 458.3V472.7M260.5 458.3V470.7M263.0 458.3V468.6M265.5 458.3V466.6M268.1 458.3V464.5M270.6 458.3V462.5M273.1 458.3V460.4M275.6 458.3V458.9M278.2 458.3V458.8M280.7 458.3V458.6M295.9 458.3V458.0M298.4 458.3V457.9M300.9 458.3V457.6M303.4 458.3V457.0M306.0 458.3V456.4M308.5 458.3V455.9M311.0 458.3V455.3M313.5 458.3V455.9M316.1 458.3V456.5M318.6 458.3V457.2M321.1 458.3V457.6M323.7 458.3V457.9M331.2 458.3V458.8M333.8 458.3V461.2M336.3 458.3V463.9M338.8 458.3V466.6M341.3 458.3V469.3M343.9 458.3V472.0M346.4 458.3V474.7M348.9 458.3V477.4M351.5 458.3V480.1M354.0 458.3V482.8M356.5 458.3V482.8M359.0 458.3V482.8M361.6 458.3V480.1M364.1 458.3V477.4M366.6 458.3V474.7M369.1 458.3V472.0M371.7 458.3V469.3M374.2 458.3V466.6M376.7 458.3V463.9M379.2 458.3V461.2M381.8 458.3V459.2M384.3 458.3V459.1M386.8 458.3V458.9M389.4 458.3V458.7M394.4 458.3V456.6M396.9 458.3V455.5M399.5 458.3V454.4M402.0 458.3V453.3M404.5 458.3V452.2M407.0 458.3V451.1M409.6 458.3V451.7M412.1 458.3V452.6M414.6 458.3V453.6M417.2 458.3V454.6M419.7 458.3V456.0M422.2 458.3V458.7M424.7 458.3V463.1M427.3 458.3V468.7M429.8 458.3V474.3M432.3 458.3V479.9M434.8 458.3V482.8M437.4 458.3V482.8M439.9 458.3V482.8M442.4 458.3V482.8M445.0 458.3V482.8M447.5 458.3V482.8M450.0 458.3V482.8M452.5 458.3V482.8M455.1 458.3V482.8M457.6 458.3V482.8M460.1 458.3V482.8M462.6 458.3V482.8M465.2 458.3V482.8M467.7 458.3V482.8M470.2 458.3V482.8M472.7 458.3V482.8M475.3 458.3V482.8M477.8 458.3V482.8M480.3 458.3V482.8M482.9 458.3V482.8M485.4 458.3V482.8M487.9 458.3V482.8M490.4 458.3V482.8M493.0 458.3V482.8M495.5 458.3V482.8M498.0 458.3V482.8M500.5 458.3V482.8M503.1 458.3V482.8M505.6 458.3V482.8M508.1 458.3V482.8M510.7 458.3V482.8M513.2 458.3V481.6M515.7 458.3V479.6M518.2 458.3V477.5M520.8 458.3V475.5M523.3 458.3V473.4M525.8 458.3V471.4M528.3 458.3V469.3M530.9 458.3V467.3M533.4 458.3V465.3M535.9 458.3V463.2M538.4 458.3V461.2M541.0 458.3V459.1M543.5 458.3V457.0M546.0 458.3V454.3M548.6 458.3V452.6M551.1 458.3V450.9M553.6 458.3V451.1M556.1 458.3V451.3" stroke="#b9b9b9" stroke-width=".95"/><path d="M159.5 459.2L170.0 457.2L179.9 455.8L186.0 459.0L211.6 483.0" fill="none" stroke="#e01818" stroke-width="1" stroke-dasharray="1.6 1.6"/><path d="M252.3 483.0L281.7 460.8L300.0 458.0L313.4 457.0L333.7 460.4L358.6 483.0" fill="none" stroke="#e01818" stroke-width="1" stroke-dasharray="1.6 1.6"/><path d="M365.4 483.0L385.0 469.0L398.6 459.2L409.9 454.0L421.2 454.0L430.2 460.4L443.8 483.0" fill="none" stroke="#e01818" stroke-width="1" stroke-dasharray="1.6 1.6"/><path d="M524.1 483.0L553.6 459.2" fill="none" stroke="#e01818" stroke-width="1" stroke-dasharray="1.6 1.6"/><path d="M160.6 321.0h4.4l-2.2 2.6z" fill="#e8e8e8"/><text xml:space="preserve" transform="translate(168.3 324.7) scale(0.897 1)" font-size="6.6" fill="#e8e8e8" text-anchor="start">USDCHF,H4  0.99453 0.99601 0.99263 0.99276</text><text xml:space="preserve" transform="translate(588.6 321.2) scale(0.915 1)" font-size="6.8" fill="#e8e8e8" text-anchor="start">1.02275</text><path d="M585.5 318.8L587.1 318.8" stroke="#d8d8d8" stroke-width="0.7" /><text xml:space="preserve" transform="translate(588.6 341.4) scale(0.915 1)" font-size="6.8" fill="#e8e8e8" text-anchor="start">1.01645</text><path d="M585.5 339.0L587.1 339.0" stroke="#d8d8d8" stroke-width="0.7" /><text xml:space="preserve" transform="translate(588.6 362.2) scale(0.915 1)" font-size="6.8" fill="#e8e8e8" text-anchor="start">1.01015</text><path d="M585.5 359.8L587.1 359.8" stroke="#d8d8d8" stroke-width="0.7" /><text xml:space="preserve" transform="translate(588.6 383.0) scale(0.915 1)" font-size="6.8" fill="#e8e8e8" text-anchor="start">1.00385</text><path d="M585.5 380.6L587.1 380.6" stroke="#d8d8d8" stroke-width="0.7" /><text xml:space="preserve" transform="translate(588.6 403.9) scale(0.915 1)" font-size="6.8" fill="#e8e8e8" text-anchor="start">0.99755</text><path d="M585.5 401.5L587.1 401.5" stroke="#d8d8d8" stroke-width="0.7" /><text xml:space="preserve" transform="translate(588.6 424.9) scale(0.915 1)" font-size="6.8" fill="#e8e8e8" text-anchor="start">0.99125</text><path d="M585.5 422.5L587.1 422.5" stroke="#d8d8d8" stroke-width="0.7" /><text xml:space="preserve" transform="translate(588.6 445.8) scale(0.915 1)" font-size="6.8" fill="#e8e8e8" text-anchor="start">0.98495</text><path d="M585.5 443.4L587.1 443.4" stroke="#d8d8d8" stroke-width="0.7" /><rect x="587.0" y="413.7" width="25.6" height="7.2" fill="#fff"/><text xml:space="preserve" transform="translate(588.6 419.7) scale(0.903 1)" font-size="6.8" fill="#000" text-anchor="start">0.99276</text><text xml:space="preserve" transform="translate(588.6 453.0) scale(0.952 1)" font-size="6.8" fill="#e8e8e8" text-anchor="start">0.000873</text><text xml:space="preserve" transform="translate(588.6 460.7) scale(0.945 1)" font-size="6.8" fill="#e8e8e8" text-anchor="start">0.00</text><text xml:space="preserve" transform="translate(161.3 454.6) scale(0.899 1)" font-size="6.6" fill="#e8e8e8" text-anchor="start">MACD(12,26,9) 0.000556 0.000106</text><path d="M649.4 317.2V445.0M669.6 317.2V445.0M689.8 317.2V445.0M710.0 317.2V445.0M730.2 317.2V445.0M750.4 317.2V445.0M770.6 317.2V445.0M790.8 317.2V445.0M811.0 317.2V445.0M831.2 317.2V445.0M851.4 317.2V445.0M871.6 317.2V445.0M891.8 317.2V445.0M912.0 317.2V445.0M932.2 317.2V445.0M952.4 317.2V445.0M972.6 317.2V445.0M992.8 317.2V445.0M1013.0 317.2V445.0M1033.2 317.2V445.0M1053.4 317.2V445.0M628.4 338.7H1055.3M628.4 359.5H1055.3M628.4 380.4H1055.3M628.4 401.4H1055.3M628.4 422.2H1055.3M628.4 443.0H1055.3" stroke="#8794a2" stroke-width=".75" stroke-dasharray="2.1 1.8" fill="none"/><path d="M649.4 446.5V483.0M669.6 446.5V483.0M689.8 446.5V483.0M710.0 446.5V483.0M730.2 446.5V483.0M750.4 446.5V483.0M770.6 446.5V483.0M790.8 446.5V483.0M811.0 446.5V483.0M831.2 446.5V483.0M851.4 446.5V483.0M871.6 446.5V483.0M891.8 446.5V483.0M912.0 446.5V483.0M932.2 446.5V483.0M952.4 446.5V483.0M972.6 446.5V483.0M992.8 446.5V483.0M1013.0 446.5V483.0M1033.2 446.5V483.0M1053.4 446.5V483.0M628.4 464.5H1055.3M628.4 478.4H1055.3" stroke="#8794a2" stroke-width=".75" stroke-dasharray="2.1 1.8" fill="none"/><path d="M628.4 413.6L1055.3 413.6" stroke="#7b8894" stroke-width="1" /><path d="M628.4 483V317.2H1055.3V483" fill="none" stroke="#d8d8d8" stroke-width=".8"/><path d="M628.4 445.3L1055.3 445.3" stroke="#c8c8c8" stroke-width="1.7" /><path d="M629.3 339.3L629.3 360.7" stroke="#14d214" stroke-width="0.9" /><rect x="627.8" y="347.1" width="3.0" height="7.9" fill="#ffffff" stroke="#14d214" stroke-width=".8"/><path d="M634.4 354.6L634.4 359.6" stroke="#14d214" stroke-width="0.9" /><rect x="632.9" y="355.0" width="3.0" height="4.3" fill="#ffffff" stroke="#14d214" stroke-width=".8"/><path d="M639.4 347.0L639.4 360.6" stroke="#14d214" stroke-width="0.9" /><rect x="637.9" y="348.6" width="3.0" height="11.8" fill="#000000" stroke="#14d214" stroke-width=".8"/><path d="M644.5 347.5L644.5 353.5" stroke="#14d214" stroke-width="0.9" /><path d="M642.8 349.4L646.2 349.4" stroke="#14d214" stroke-width="1.1" /><path d="M649.5 343.0L649.5 351.0" stroke="#14d214" stroke-width="0.9" /><path d="M647.8 348.9L651.2 348.9" stroke="#14d214" stroke-width="1.1" /><path d="M654.6 346.5L654.6 351.0" stroke="#14d214" stroke-width="0.9" /><path d="M652.9 348.6L656.3 348.6" stroke="#14d214" stroke-width="1.1" /><path d="M659.6 344.0L659.6 350.0" stroke="#14d214" stroke-width="0.9" /><rect x="658.1" y="345.0" width="3.0" height="3.6" fill="#000000" stroke="#14d214" stroke-width=".8"/><path d="M664.7 346.0L664.7 347.4" stroke="#14d214" stroke-width="0.9" /><path d="M663.0 346.8L666.4 346.8" stroke="#14d214" stroke-width="1.1" /><path d="M669.7 340.0L669.7 352.1" stroke="#14d214" stroke-width="0.9" /><rect x="668.2" y="343.3" width="3.0" height="3.4" fill="#000000" stroke="#14d214" stroke-width=".8"/><path d="M674.8 343.2L674.8 351.4" stroke="#14d214" stroke-width="0.9" /><rect x="673.3" y="343.6" width="3.0" height="1.7" fill="#ffffff" stroke="#14d214" stroke-width=".8"/><path d="M679.8 344.0L679.8 364.5" stroke="#14d214" stroke-width="0.9" /><rect x="678.3" y="345.0" width="3.0" height="18.3" fill="#ffffff" stroke="#14d214" stroke-width=".8"/><path d="M684.9 345.7L684.9 363.2" stroke="#14d214" stroke-width="0.9" /><rect x="683.4" y="350.7" width="3.0" height="12.2" fill="#000000" stroke="#14d214" stroke-width=".8"/><path d="M689.9 340.7L689.9 355.7" stroke="#14d214" stroke-width="0.9" /><rect x="688.4" y="345.3" width="3.0" height="5.7" fill="#000000" stroke="#14d214" stroke-width=".8"/><path d="M695.0 344.6L695.0 357.6" stroke="#14d214" stroke-width="0.9" /><rect x="693.5" y="345.0" width="3.0" height="10.3" fill="#ffffff" stroke="#14d214" stroke-width=".8"/><path d="M700.0 355.0L700.0 367.6" stroke="#14d214" stroke-width="0.9" /><rect x="698.5" y="355.4" width="3.0" height="5.0" fill="#ffffff" stroke="#14d214" stroke-width=".8"/><path d="M705.1 351.4L705.1 362.4" stroke="#14d214" stroke-width="0.9" /><rect x="703.6" y="360.4" width="3.0" height="1.7" fill="#ffffff" stroke="#14d214" stroke-width=".8"/><path d="M710.1 357.9L710.1 367.6" stroke="#14d214" stroke-width="0.9" /><path d="M708.4 361.9L711.8 361.9" stroke="#14d214" stroke-width="1.1" /><path d="M715.2 352.1L715.2 364.7" stroke="#14d214" stroke-width="0.9" /><rect x="713.7" y="356.1" width="3.0" height="5.3" fill="#000000" stroke="#14d214" stroke-width=".8"/><path d="M720.2 349.3L720.2 365.0" stroke="#14d214" stroke-width="0.9" /><rect x="718.7" y="354.3" width="3.0" height="2.4" fill="#000000" stroke="#14d214" stroke-width=".8"/><path d="M725.3 337.1L725.3 356.0" stroke="#14d214" stroke-width="0.9" /><rect x="723.8" y="342.4" width="3.0" height="13.3" fill="#000000" stroke="#14d214" stroke-width=".8"/><path d="M730.3 340.0L730.3 350.0" stroke="#14d214" stroke-width="0.9" /><rect x="728.8" y="342.9" width="3.0" height="5.2" fill="#ffffff" stroke="#14d214" stroke-width=".8"/><path d="M735.4 335.3L735.4 348.4" stroke="#14d214" stroke-width="0.9" /><rect x="733.9" y="337.1" width="3.0" height="11.0" fill="#000000" stroke="#14d214" stroke-width=".8"/><path d="M740.4 329.0L740.4 339.3" stroke="#14d214" stroke-width="0.9" /><rect x="738.9" y="336.5" width="3.0" height="1.5" fill="#000000" stroke="#14d214" stroke-width=".8"/><path d="M745.5 334.0L745.5 338.6" stroke="#14d214" stroke-width="0.9" /><rect x="744.0" y="336.4" width="3.0" height="1.9" fill="#ffffff" stroke="#14d214" stroke-width=".8"/><path d="M750.5 324.3L750.5 340.7" stroke="#14d214" stroke-width="0.9" /><rect x="749.0" y="337.0" width="3.0" height="1.3" fill="#000000" stroke="#14d214" stroke-width=".8"/><path d="M755.6 336.3L755.6 350.0" stroke="#14d214" stroke-width="0.9" /><rect x="754.1" y="336.7" width="3.0" height="4.0" fill="#ffffff" stroke="#14d214" stroke-width=".8"/><path d="M760.6 341.0L760.6 363.6" stroke="#14d214" stroke-width="0.9" /><rect x="759.1" y="341.4" width="3.0" height="19.0" fill="#ffffff" stroke="#14d214" stroke-width=".8"/><path d="M765.7 353.3L765.7 377.1" stroke="#14d214" stroke-width="0.9" /><rect x="764.2" y="360.4" width="3.0" height="14.6" fill="#ffffff" stroke="#14d214" stroke-width=".8"/><path d="M770.7 374.6L770.7 390.0" stroke="#14d214" stroke-width="0.9" /><rect x="769.2" y="375.0" width="3.0" height="12.5" fill="#ffffff" stroke="#14d214" stroke-width=".8"/><path d="M775.8 380.7L775.8 392.1" stroke="#14d214" stroke-width="0.9" /><path d="M774.1 387.6L777.5 387.6" stroke="#14d214" stroke-width="1.1" /><path d="M780.8 383.3L780.8 403.6" stroke="#14d214" stroke-width="0.9" /><rect x="779.3" y="387.1" width="3.0" height="15.0" fill="#ffffff" stroke="#14d214" stroke-width=".8"/><path d="M785.9 399.0L785.9 416.4" stroke="#14d214" stroke-width="0.9" /><rect x="784.4" y="402.1" width="3.0" height="14.0" fill="#ffffff" stroke="#14d214" stroke-width=".8"/><path d="M790.9 411.4L790.9 421.9" stroke="#14d214" stroke-width="0.9" /><path d="M789.2 416.1L792.6 416.1" stroke="#14d214" stroke-width="1.1" /><path d="M796.0 415.3L796.0 427.4" stroke="#14d214" stroke-width="0.9" /><rect x="794.5" y="415.7" width="3.0" height="11.4" fill="#ffffff" stroke="#14d214" stroke-width=".8"/><path d="M801.0 410.4L801.0 427.9" stroke="#14d214" stroke-width="0.9" /><rect x="799.5" y="416.1" width="3.0" height="11.5" fill="#000000" stroke="#14d214" stroke-width=".8"/><path d="M806.1 409.3L806.1 418.6" stroke="#14d214" stroke-width="0.9" /><rect x="804.6" y="412.1" width="3.0" height="4.0" fill="#000000" stroke="#14d214" stroke-width=".8"/><path d="M811.1 405.7L811.1 421.4" stroke="#14d214" stroke-width="0.9" /><rect x="809.6" y="412.1" width="3.0" height="3.6" fill="#ffffff" stroke="#14d214" stroke-width=".8"/><path d="M816.2 415.7L816.2 438.6" stroke="#14d214" stroke-width="0.9" /><rect x="814.7" y="416.1" width="3.0" height="11.8" fill="#ffffff" stroke="#14d214" stroke-width=".8"/><path d="M821.2 426.4L821.2 436.7" stroke="#14d214" stroke-width="0.9" /><rect x="819.7" y="428.6" width="3.0" height="7.8" fill="#ffffff" stroke="#14d214" stroke-width=".8"/><path d="M826.3 429.3L826.3 440.0" stroke="#14d214" stroke-width="0.9" /><rect x="824.8" y="433.3" width="3.0" height="3.4" fill="#000000" stroke="#14d214" stroke-width=".8"/><path d="M831.3 422.1L831.3 440.4" stroke="#14d214" stroke-width="0.9" /><rect x="829.8" y="423.3" width="3.0" height="10.0" fill="#000000" stroke="#14d214" stroke-width=".8"/><path d="M836.4 416.1L836.4 436.4" stroke="#14d214" stroke-width="0.9" /><rect x="834.9" y="420.4" width="3.0" height="4.3" fill="#000000" stroke="#14d214" stroke-width=".8"/><path d="M841.4 411.0L841.4 432.9" stroke="#14d214" stroke-width="0.9" /><rect x="839.9" y="418.1" width="3.0" height="2.9" fill="#000000" stroke="#14d214" stroke-width=".8"/><path d="M846.5 418.2L846.5 431.4" stroke="#14d214" stroke-width="0.9" /><rect x="845.0" y="418.6" width="3.0" height="4.3" fill="#ffffff" stroke="#14d214" stroke-width=".8"/><path d="M851.5 415.7L851.5 425.0" stroke="#14d214" stroke-width="0.9" /><path d="M849.8 423.6L853.2 423.6" stroke="#14d214" stroke-width="1.1" /><path d="M856.6 421.4L856.6 430.0" stroke="#14d214" stroke-width="0.9" /><rect x="855.1" y="423.6" width="3.0" height="2.4" fill="#ffffff" stroke="#14d214" stroke-width=".8"/><path d="M861.6 414.3L861.6 433.6" stroke="#14d214" stroke-width="0.9" /><rect x="860.1" y="417.6" width="3.0" height="8.8" fill="#000000" stroke="#14d214" stroke-width=".8"/><path d="M866.7 410.0L866.7 442.1" stroke="#14d214" stroke-width="0.9" /><rect x="865.2" y="417.9" width="3.0" height="15.7" fill="#ffffff" stroke="#14d214" stroke-width=".8"/><path d="M871.7 412.1L871.7 436.4" stroke="#14d214" stroke-width="0.9" /><rect x="870.2" y="413.3" width="3.0" height="20.3" fill="#000000" stroke="#14d214" stroke-width=".8"/><path d="M876.8 404.3L876.8 414.2" stroke="#14d214" stroke-width="0.9" /><rect x="875.3" y="405.3" width="3.0" height="8.6" fill="#000000" stroke="#14d214" stroke-width=".8"/><path d="M881.8 405.3L881.8 421.4" stroke="#14d214" stroke-width="0.9" /><rect x="880.3" y="405.7" width="3.0" height="6.2" fill="#ffffff" stroke="#14d214" stroke-width=".8"/><path d="M886.9 411.8L886.9 420.7" stroke="#14d214" stroke-width="0.9" /><rect x="885.4" y="412.1" width="3.0" height="8.3" fill="#ffffff" stroke="#14d214" stroke-width=".8"/><path d="M892.0 415.7L892.0 427.9" stroke="#14d214" stroke-width="0.9" /><rect x="890.5" y="420.4" width="3.0" height="1.7" fill="#ffffff" stroke="#14d214" stroke-width=".8"/><path d="M897.0 417.9L897.0 430.0" stroke="#14d214" stroke-width="0.9" /><rect x="895.5" y="422.9" width="3.0" height="2.4" fill="#ffffff" stroke="#14d214" stroke-width=".8"/><path d="M902.1 413.6L902.1 428.6" stroke="#14d214" stroke-width="0.9" /><rect x="900.6" y="420.4" width="3.0" height="4.9" fill="#000000" stroke="#14d214" stroke-width=".8"/><path d="M907.1 400.0L907.1 420.8" stroke="#14d214" stroke-width="0.9" /><rect x="905.6" y="409.5" width="3.0" height="11.0" fill="#000000" stroke="#14d214" stroke-width=".8"/><path d="M912.2 401.0L912.2 413.0" stroke="#14d214" stroke-width="0.9" /><rect x="910.7" y="406.0" width="3.0" height="3.8" fill="#000000" stroke="#14d214" stroke-width=".8"/><path d="M917.2 403.0L917.2 409.6" stroke="#14d214" stroke-width="0.9" /><path d="M915.5 405.9L918.9 405.9" stroke="#14d214" stroke-width="1.1" /><path d="M922.3 403.4L922.3 409.1" stroke="#14d214" stroke-width="0.9" /><rect x="920.8" y="403.7" width="3.0" height="2.2" fill="#000000" stroke="#14d214" stroke-width=".8"/><path d="M927.3 397.0L927.3 438.5" stroke="#14d214" stroke-width="0.9" /><rect x="925.8" y="403.2" width="3.0" height="28.4" fill="#ffffff" stroke="#14d214" stroke-width=".8"/><path d="M932.4 419.9L932.4 436.5" stroke="#14d214" stroke-width="0.9" /><rect x="930.9" y="424.3" width="3.0" height="8.1" fill="#000000" stroke="#14d214" stroke-width=".8"/><path d="M937.4 417.4L937.4 427.6" stroke="#14d214" stroke-width="0.9" /><rect x="935.9" y="419.9" width="3.0" height="5.1" fill="#000000" stroke="#14d214" stroke-width=".8"/><path d="M942.5 400.7L942.5 411.5" stroke="#14d214" stroke-width="0.9" /><path d="M940.8 406.2L944.2 406.2" stroke="#14d214" stroke-width="1.1" /><path d="M947.5 393.8L947.5 406.9" stroke="#14d214" stroke-width="0.9" /><rect x="946.0" y="394.1" width="3.0" height="12.5" fill="#000000" stroke="#14d214" stroke-width=".8"/><path d="M952.6 390.4L952.6 398.8" stroke="#14d214" stroke-width="0.9" /><rect x="951.1" y="394.4" width="3.0" height="2.6" fill="#ffffff" stroke="#14d214" stroke-width=".8"/><path d="M957.6 393.8L957.6 407.0" stroke="#14d214" stroke-width="0.9" /><rect x="956.1" y="397.0" width="3.0" height="8.6" fill="#ffffff" stroke="#14d214" stroke-width=".8"/><path d="M962.7 397.4L962.7 405.9" stroke="#14d214" stroke-width="0.9" /><rect x="961.2" y="400.7" width="3.0" height="4.9" fill="#000000" stroke="#14d214" stroke-width=".8"/><path d="M967.7 398.5L967.7 414.7" stroke="#14d214" stroke-width="0.9" /><rect x="966.2" y="400.7" width="3.0" height="5.9" fill="#ffffff" stroke="#14d214" stroke-width=".8"/><path d="M972.8 403.4L972.8 413.0" stroke="#14d214" stroke-width="0.9" /><rect x="971.3" y="403.7" width="3.0" height="4.3" fill="#000000" stroke="#14d214" stroke-width=".8"/><path d="M977.8 395.6L977.8 404.7" stroke="#14d214" stroke-width="0.9" /><rect x="976.3" y="398.2" width="3.0" height="6.2" fill="#000000" stroke="#14d214" stroke-width=".8"/><path d="M982.9 392.6L982.9 401.5" stroke="#14d214" stroke-width="0.9" /><rect x="981.4" y="392.9" width="3.0" height="5.9" fill="#000000" stroke="#14d214" stroke-width=".8"/><path d="M987.9 386.8L987.9 396.8" stroke="#14d214" stroke-width="0.9" /><rect x="986.4" y="392.9" width="3.0" height="1.5" fill="#ffffff" stroke="#14d214" stroke-width=".8"/><path d="M993.0 389.4L993.0 407.4" stroke="#14d214" stroke-width="0.9" /><rect x="991.5" y="392.9" width="3.0" height="13.3" fill="#ffffff" stroke="#14d214" stroke-width=".8"/><path d="M998.0 400.0L998.0 406.9" stroke="#14d214" stroke-width="0.9" /><rect x="996.5" y="401.8" width="3.0" height="4.8" fill="#000000" stroke="#14d214" stroke-width=".8"/><path d="M1003.1 399.3L1003.1 406.6" stroke="#14d214" stroke-width="0.9" /><path d="M1001.4 402.2L1004.8 402.2" stroke="#14d214" stroke-width="1.1" /><path d="M1008.1 401.5L1008.1 407.6" stroke="#14d214" stroke-width="0.9" /><rect x="1006.6" y="401.8" width="3.0" height="1.9" fill="#ffffff" stroke="#14d214" stroke-width=".8"/><path d="M1013.2 403.8L1013.2 420.3" stroke="#14d214" stroke-width="0.9" /><rect x="1011.7" y="404.1" width="3.0" height="13.8" fill="#ffffff" stroke="#14d214" stroke-width=".8"/><path d="M1018.2 406.2L1018.2 419.9" stroke="#14d214" stroke-width="0.9" /><rect x="1016.7" y="410.3" width="3.0" height="8.1" fill="#000000" stroke="#14d214" stroke-width=".8"/><path d="M1023.3 400.7L1023.3 411.8" stroke="#14d214" stroke-width="0.9" /><rect x="1021.8" y="403.7" width="3.0" height="6.6" fill="#000000" stroke="#14d214" stroke-width=".8"/><path d="M1028.3 400.7L1028.3 408.1" stroke="#14d214" stroke-width="0.9" /><path d="M1026.6 403.2L1030.0 403.2" stroke="#14d214" stroke-width="1.1" /><path d="M1033.4 400.3L1033.4 406.6" stroke="#14d214" stroke-width="0.9" /><path d="M1031.7 403.2L1035.1 403.2" stroke="#14d214" stroke-width="1.1" /><path d="M1038.4 402.2L1038.4 422.8" stroke="#14d214" stroke-width="0.9" /><rect x="1036.9" y="403.7" width="3.0" height="6.6" fill="#ffffff" stroke="#14d214" stroke-width=".8"/><path d="M1043.5 410.0L1043.5 418.8" stroke="#14d214" stroke-width="0.9" /><rect x="1042.0" y="410.3" width="3.0" height="3.2" fill="#ffffff" stroke="#14d214" stroke-width=".8"/><path d="M658.2 483.0L669.6 472.8L674.4 475.7L675.8 483.0" fill="none" stroke="#22a09c" stroke-width="0.95" /><path d="M686.2 483.0L689.7 473.2L694.5 483.0" fill="none" stroke="#22a09c" stroke-width="0.95" /><path d="M720.4 483.0L725.6 465.9L729.8 467.0L736.0 459.7L740.8 456.2L745.3 461.8L750.1 462.2L759.9 483.0" fill="none" stroke="#22a09c" stroke-width="0.95" /><path d="M841.0 481.5L846.2 483.0" fill="none" stroke="#22a09c" stroke-width="0.95" /><path d="M847.2 483.0L851.4 478.4L855.5 483.0" fill="none" stroke="#22a09c" stroke-width="0.95" /><path d="M857.6 483.0L861.1 474.9L864.9 483.0" fill="none" stroke="#22a09c" stroke-width="0.95" /><path d="M869.0 483.0L876.7 450.0L894.5 483.0" fill="none" stroke="#22a09c" stroke-width="0.95" /><path d="M899.1 483.0L902.2 478.4L907.4 458.7L911.5 458.7L920.9 462.8L926.1 483.0" fill="none" stroke="#22a09c" stroke-width="0.95" /><path d="M938.5 483.0L942.7 465.9L947.8 459.3L952.0 460.7L958.2 468.0L963.4 469.5L968.0 474.9L971.7 476.3L977.9 467.0L983.1 463.9L987.9 462.4L993.5 473.2L998.7 477.8L1001.8 478.4L1005.9 483.0" fill="none" stroke="#22a09c" stroke-width="0.95" /><path d="M1023.6 483.0L1031.9 478.8L1035.0 483.0" fill="none" stroke="#22a09c" stroke-width="0.95" /><path d="M1054.0 482.0L1055.0 481.5" fill="none" stroke="#22a09c" stroke-width="0.95" /><path d="M630.8 321.0h4.4l-2.2 2.6z" fill="#e8e8e8"/><text xml:space="preserve" transform="translate(638.6 324.7) scale(0.889 1)" font-size="6.6" fill="#e8e8e8" text-anchor="start">USDJPY,H4  108.375 108.375 108.235 108.316</text><text xml:space="preserve" transform="translate(631.6 454.6) scale(0.896 1)" font-size="6.6" fill="#e8e8e8" text-anchor="start">CCI(14) -130.7394</text><rect x="1057" y="410" width="6" height="7.2" fill="#fff"/><text xml:space="preserve" transform="translate(1058.2 466.9) scale(0.952 1)" font-size="6.8" fill="#e8e8e8" text-anchor="start">1</text><text xml:space="preserve" transform="translate(1058.2 480.8) scale(0.952 1)" font-size="6.8" fill="#e8e8e8" text-anchor="start">0</text><text xml:space="preserve" transform="translate(1058.2 452.4) scale(0.952 1)" font-size="6.8" fill="#e8e8e8" text-anchor="start">2</text></svg></div></div>
<div style="left:149.00px;top:482.60px;width:912.00px;height:12.60px;background:#f0f0f0;"></div>
<div style="left:149.00px;top:482.60px;width:912.00px;height:0.90px;background:#fcfcfc;"></div>
<div style="left:205.50px;top:485.00px;width:212.00px;height:0.80px;background:#b8b8b8;"></div>
<div style="left:154.00px;top:483.20px;width:52.00px;height:12.00px;background:#fff;border:1px solid #6a6a6a;border-top:none;border-bottom:none;box-sizing:border-box;"></div>
<div style="left:150.00px;top:484.00px;width:3.20px;height:11.00px;background:#f4f4f4;border:1px solid #8a8a8a;border-top:none;border-bottom:none;box-sizing:border-box;"></div>
<span class="t" style="top:485.20px;font-size:8.2px;line-height:10.2px;color:#1a1a1a;left:160.00px;transform:scaleX(0.812);transform-origin:0 0;">EURUSD,H4</span>
<span class="t" style="top:485.20px;font-size:8.2px;line-height:10.2px;color:#7d7d7d;left:212.50px;transform:scaleX(0.858);transform-origin:0 0;">USDCHF,H4</span>
<span class="t" style="top:485.20px;font-size:8.2px;line-height:10.2px;color:#7d7d7d;left:266.00px;transform:scaleX(0.833);transform-origin:0 0;">GBPUSD,H4</span>
<span class="t" style="top:485.20px;font-size:8.2px;line-height:10.2px;color:#7d7d7d;left:319.50px;transform:scaleX(0.851);transform-origin:0 0;">USDJPY,H4</span>
<span class="t" style="top:485.20px;font-size:8.2px;line-height:10.2px;color:#7d7d7d;left:369.50px;transform:scaleX(0.842);transform-origin:0 0;">XAUUSD,H1</span>
<div style="left:259.50px;top:485.50px;width:1.00px;height:9.50px;background:#9a9a9a;"></div>
<div style="left:312.40px;top:485.50px;width:1.00px;height:9.50px;background:#9a9a9a;"></div>
<div style="left:363.30px;top:485.50px;width:1.00px;height:9.50px;background:#9a9a9a;"></div>
<div style="left:417.00px;top:485.50px;width:1.00px;height:9.50px;background:#9a9a9a;"></div>
<svg class="a" style="left:1041px;top:487.2px" width="4" height="5.2" viewBox="0 0 4 5.2"><path d="M3.2 .4L.6 2.6l2.6 2.2z" fill="#8c8c8c"/></svg>
<svg class="a" style="left:1053px;top:487.2px" width="4" height="5.2" viewBox="0 0 4 5.2"><path d="M.6 .4l2.6 2.2L.6 4.8z" fill="#8c8c8c"/></svg>
<div style="left:0.00px;top:495.00px;width:1061.00px;height:135.00px;background:#f0f0f0;"></div>
<div style="left:0.00px;top:626.00px;width:1061.00px;height:4.00px;background:#dcdfe0;"></div>
<div style="left:3.00px;top:499.00px;width:6.50px;height:127.00px;background:linear-gradient(#f0f0f0,#b4cce8 12%,#abc5e4);"></div>
<svg class="a" style="left:3px;top:500.8px" width="4.4" height="4.4" viewBox="0 0 5 5"><path d="M.7 .7l3.6 3.6M4.3 .7L.7 4.3" stroke="#222" stroke-width=".9"/></svg>
<span class="t" style="left:2.6px;top:625.5px;font-size:7.2px;line-height:7px;color:#1c1c1c;-webkit-text-stroke:.15px #1c1c1c;transform:rotate(-90deg) scaleX(.95);transform-origin:0 0;">Терминал</span>
<div style="left:9.50px;top:499.00px;width:1049.50px;height:114.50px;background:#fff;border:1px solid #8e8e8e;border-left-color:#d4d4d4;border-right-color:#d4d4d4;border-bottom:1px solid #555;box-sizing:border-box;"></div>
<div style="left:10.50px;top:500.00px;width:1047.50px;height:15.00px;background:linear-gradient(#fff,#f7f7f7 55%,#ececec);border-bottom:1px solid #d5d5d5;box-sizing:border-box;"></div>
<div style="left:112.00px;top:500.00px;width:1.00px;height:14.00px;background:#e0e0e0;"></div>
<div style="left:112.00px;top:515.00px;width:1.00px;height:12.50px;background:#ececec;"></div>
<div style="left:112.00px;top:540.00px;width:1.00px;height:12.50px;background:#ececec;"></div>
<div style="left:257.00px;top:500.00px;width:1.00px;height:14.00px;background:#e0e0e0;"></div>
<div style="left:257.00px;top:515.00px;width:1.00px;height:12.50px;background:#ececec;"></div>
<div style="left:257.00px;top:540.00px;width:1.00px;height:12.50px;background:#ececec;"></div>
<div style="left:329.00px;top:500.00px;width:1.00px;height:14.00px;background:#e0e0e0;"></div>
<div style="left:329.00px;top:515.00px;width:1.00px;height:12.50px;background:#ececec;"></div>
<div style="left:329.00px;top:540.00px;width:1.00px;height:12.50px;background:#ececec;"></div>
<div style="left:385.00px;top:500.00px;width:1.00px;height:14.00px;background:#e0e0e0;"></div>
<div style="left:385.00px;top:515.00px;width:1.00px;height:12.50px;background:#ececec;"></div>
<div style="left:385.00px;top:540.00px;width:1.00px;height:12.50px;background:#ececec;"></div>
<div style="left:457.00px;top:500.00px;width:1.00px;height:14.00px;background:#e0e0e0;"></div>
<div style="left:457.00px;top:515.00px;width:1.00px;height:12.50px;background:#ececec;"></div>
<div style="left:457.00px;top:540.00px;width:1.00px;height:12.50px;background:#ececec;"></div>
<div style="left:536.50px;top:500.00px;width:1.00px;height:14.00px;background:#e0e0e0;"></div>
<div style="left:536.50px;top:515.00px;width:1.00px;height:12.50px;background:#ececec;"></div>
<div style="left:536.50px;top:540.00px;width:1.00px;height:12.50px;background:#ececec;"></div>
<div style="left:615.80px;top:500.00px;width:1.00px;height:14.00px;background:#e0e0e0;"></div>
<div style="left:615.80px;top:515.00px;width:1.00px;height:12.50px;background:#ececec;"></div>
<div style="left:615.80px;top:540.00px;width:1.00px;height:12.50px;background:#ececec;"></div>
<div style="left:695.00px;top:500.00px;width:1.00px;height:14.00px;background:#e0e0e0;"></div>
<div style="left:695.00px;top:515.00px;width:1.00px;height:12.50px;background:#ececec;"></div>
<div style="left:695.00px;top:540.00px;width:1.00px;height:12.50px;background:#ececec;"></div>
<div style="left:775.00px;top:500.00px;width:1.00px;height:14.00px;background:#e0e0e0;"></div>
<div style="left:775.00px;top:515.00px;width:1.00px;height:12.50px;background:#ececec;"></div>
<div style="left:775.00px;top:540.00px;width:1.00px;height:12.50px;background:#ececec;"></div>
<div style="left:855.50px;top:500.00px;width:1.00px;height:14.00px;background:#e0e0e0;"></div>
<div style="left:855.50px;top:515.00px;width:1.00px;height:12.50px;background:#ececec;"></div>
<div style="left:855.50px;top:540.00px;width:1.00px;height:12.50px;background:#ececec;"></div>
<div style="left:934.00px;top:500.00px;width:1.00px;height:14.00px;background:#e0e0e0;"></div>
<div style="left:934.00px;top:515.00px;width:1.00px;height:12.50px;background:#ececec;"></div>
<div style="left:934.00px;top:540.00px;width:1.00px;height:12.50px;background:#ececec;"></div>
<span class="t" style="top:502.80px;font-size:8px;line-height:10px;color:#1a1a1a;left:14.00px;transform:scaleX(0.915);transform-origin:0 0;">Ордер</span>
<span class="t" style="top:503.30px;font-size:7px;line-height:9px;color:#999;left:44.00px;transform:scaleX(0.850);transform-origin:0 0;">/</span>
<span class="t" style="top:502.80px;font-size:8px;line-height:10px;color:#1a1a1a;left:230.43px;width:24.07px;transform:scaleX(0.997);transform-origin:100% 0;">Время</span>
<span class="t" style="top:502.80px;font-size:8px;line-height:10px;color:#1a1a1a;left:313.16px;width:13.34px;transform:scaleX(0.975);transform-origin:100% 0;">Тип</span>
<span class="t" style="top:502.80px;font-size:8px;line-height:10px;color:#1a1a1a;left:357.01px;width:25.49px;transform:scaleX(0.942);transform-origin:100% 0;">Объем</span>
<span class="t" style="top:502.80px;font-size:8px;line-height:10px;color:#1a1a1a;left:424.75px;width:28.85px;transform:scaleX(0.936);transform-origin:100% 0;">Символ</span>
<span class="t" style="top:502.80px;font-size:8px;line-height:10px;color:#1a1a1a;left:514.27px;width:19.23px;transform:scaleX(0.988);transform-origin:100% 0;">Цена</span>
<span class="t" style="top:502.80px;font-size:8px;line-height:10px;color:#1a1a1a;left:596.05px;width:16.45px;transform:scaleX(0.912);transform-origin:100% 0;">S / L</span>
<span class="t" style="top:502.80px;font-size:8px;line-height:10px;color:#1a1a1a;left:675.75px;width:16.75px;transform:scaleX(0.896);transform-origin:100% 0;">T / P</span>
<span class="t" style="top:502.80px;font-size:8px;line-height:10px;color:#1a1a1a;left:753.27px;width:19.23px;transform:scaleX(0.988);transform-origin:100% 0;">Цена</span>
<span class="t" style="top:502.80px;font-size:8px;line-height:10px;color:#1a1a1a;left:816.62px;width:35.88px;transform:scaleX(0.976);transform-origin:100% 0;">Комиссия</span>
<span class="t" style="top:502.80px;font-size:8px;line-height:10px;color:#1a1a1a;left:911.78px;width:18.72px;transform:scaleX(0.962);transform-origin:100% 0;">Своп</span>
<span class="t" style="top:502.80px;font-size:8px;line-height:10px;color:#1a1a1a;left:1020.66px;width:33.84px;transform:scaleX(0.946);transform-origin:100% 0;">Прибыль</span>
<div style="left:10.50px;top:527.70px;width:1047.50px;height:12.40px;background:#c9c9c9;"></div>
<div style="left:10.50px;top:527.00px;width:1047.50px;height:0.70px;background:#e6e6e6;"></div>
<div style="left:10.50px;top:552.30px;width:1047.50px;height:0.80px;background:#e0e0e0;"></div>
<svg class="a" style="left:12px;top:516.5px" width="9" height="10" viewBox="0 0 9 10"><path d="M.5 .5h4.5l2 2v6.5h-6.5z" fill="#fff" stroke="#555" stroke-width=".8"/><path d="M5 .5v2h2" fill="none" stroke="#555" stroke-width=".6"/><circle cx="6.3" cy="7.6" r="2" fill="#2f86e0"/></svg>
<svg class="a" style="left:12px;top:541.8px" width="9" height="10" viewBox="0 0 9 10"><path d="M.5 .5h4.5l2 2v6.5h-6.5z" fill="#fff" stroke="#555" stroke-width=".8"/><path d="M5 .5v2h2" fill="none" stroke="#555" stroke-width=".6"/><circle cx="6.3" cy="7.6" r="2" fill="#e8541c"/></svg>
<svg class="a" style="left:12px;top:529.2px" width="9" height="9" viewBox="0 0 9 9"><rect x=".5" y=".5" width="8" height="8" rx="1" fill="#f4fff4" stroke="#666" stroke-width=".8"/><path d="M4.5 1.8L7 4.6H5.4V7H3.6V4.6H2z" fill="#22a022"/></svg>
<span class="t" style="top:516.60px;font-size:8px;line-height:10px;color:#1a1a1a;left:24.00px;transform:scaleX(0.857);transform-origin:0 0;">233456046</span>
<span class="t" style="top:516.60px;font-size:8px;line-height:10px;color:#1a1a1a;left:183.20px;width:72.80px;transform:scaleX(0.872);transform-origin:100% 0;">2019.06.13 11:10:53</span>
<span class="t" style="top:516.60px;font-size:8px;line-height:10px;color:#1a1a1a;left:314.60px;width:12.90px;transform:scaleX(1.008);transform-origin:100% 0;">buy</span>
<span class="t" style="top:516.60px;font-size:8px;line-height:10px;color:#1a1a1a;left:367.43px;width:15.57px;transform:scaleX(0.860);transform-origin:100% 0;">1.00</span>
<span class="t" style="top:516.60px;font-size:8px;line-height:10px;color:#1a1a1a;left:429.20px;width:25.80px;transform:scaleX(0.884);transform-origin:100% 0;">xauusd</span>
<span class="t" style="top:516.60px;font-size:8px;line-height:10px;color:#1a1a1a;left:504.88px;width:28.91px;transform:scaleX(0.860);transform-origin:100% 0;">1337.61</span>
<span class="t" style="top:516.60px;font-size:8px;line-height:10px;color:#1a1a1a;left:597.93px;width:15.57px;transform:scaleX(0.860);transform-origin:100% 0;">0.00</span>
<span class="t" style="top:516.60px;font-size:8px;line-height:10px;color:#1a1a1a;left:677.93px;width:15.57px;transform:scaleX(0.860);transform-origin:100% 0;">0.00</span>
<span class="t" style="top:516.60px;font-size:8px;line-height:10px;color:#1a1a1a;left:744.59px;width:28.91px;transform:scaleX(0.860);transform-origin:100% 0;">1337.85</span>
<span class="t" style="top:516.60px;font-size:8px;line-height:10px;color:#1a1a1a;left:834.77px;width:18.23px;transform:scaleX(0.860);transform-origin:100% 0;">-4.01</span>
<span class="t" style="top:516.60px;font-size:8px;line-height:10px;color:#1a1a1a;left:916.43px;width:15.57px;transform:scaleX(0.860);transform-origin:100% 0;">0.00</span>
<span class="t" style="top:516.60px;font-size:8px;line-height:10px;color:#1a1a1a;left:1023.48px;width:20.02px;transform:scaleX(0.860);transform-origin:100% 0;">24.00</span>
<span class="t" style="top:541.70px;font-size:8px;line-height:10px;color:#1a1a1a;left:24.00px;transform:scaleX(0.857);transform-origin:0 0;">233456085</span>
<span class="t" style="top:541.70px;font-size:8px;line-height:10px;color:#1a1a1a;left:183.79px;width:72.21px;transform:scaleX(0.879);transform-origin:100% 0;">2019.06.13 11:11:19</span>
<span class="t" style="top:541.70px;font-size:8px;line-height:10px;color:#1a1a1a;left:299.06px;width:28.45px;transform:scaleX(0.949);transform-origin:100% 0;">sell limit</span>
<span class="t" style="top:541.70px;font-size:8px;line-height:10px;color:#1a1a1a;left:367.43px;width:15.57px;transform:scaleX(0.860);transform-origin:100% 0;">1.00</span>
<span class="t" style="top:541.70px;font-size:8px;line-height:10px;color:#1a1a1a;left:429.20px;width:25.80px;transform:scaleX(0.884);transform-origin:100% 0;">xauusd</span>
<span class="t" style="top:541.70px;font-size:8px;line-height:10px;color:#1a1a1a;left:504.88px;width:28.91px;transform:scaleX(0.860);transform-origin:100% 0;">1350.00</span>
<span class="t" style="top:541.70px;font-size:8px;line-height:10px;color:#1a1a1a;left:597.93px;width:15.57px;transform:scaleX(0.860);transform-origin:100% 0;">0.00</span>
<span class="t" style="top:541.70px;font-size:8px;line-height:10px;color:#1a1a1a;left:677.93px;width:15.57px;transform:scaleX(0.860);transform-origin:100% 0;">0.00</span>
<span class="t" style="top:541.70px;font-size:8px;line-height:10px;color:#1a1a1a;left:744.59px;width:28.91px;transform:scaleX(0.860);transform-origin:100% 0;">1337.85</span>
<span class="t" style="top:529.10px;font-size:8px;line-height:10px;color:#111;font-weight:bold;left:24.00px;transform:scaleX(0.924);transform-origin:0 0;">Баланс: 10 000.00 USD  Средства: 10 019.99  Маржа: 535.04  Свободная маржа: 9 484.95  Уровень: 1872.74%</span>
<span class="t" style="top:529.10px;font-size:8px;line-height:10px;color:#111;font-weight:bold;left:1023.48px;width:20.02px;transform:scaleX(0.924);transform-origin:100% 0;">19.99</span>
<svg class="a" style="left:1049px;top:519.1px" width="5" height="5" viewBox="0 0 5 5"><path d="M.5 .5l4 4M4.5 .5l-4 4" stroke="#8a8a8a" stroke-width=".9"/></svg>
<svg class="a" style="left:1049px;top:544.2px" width="5" height="5" viewBox="0 0 5 5"><path d="M.5 .5l4 4M4.5 .5l-4 4" stroke="#8a8a8a" stroke-width=".9"/></svg>
<div style="left:11.00px;top:613.00px;width:46.00px;height:13.00px;background:#fff;border:1px solid #555;border-top:none;box-sizing:border-box;"></div>
<span class="t" style="top:614.60px;font-size:8px;line-height:10px;color:#222;-webkit-text-stroke:.14px #222;left:17.60px;transform:scaleX(0.973);transform-origin:0 0;">Торговля</span>
<span class="t" style="top:614.50px;font-size:8px;line-height:10px;color:#6e6e6e;left:63.00px;transform:scaleX(0.961);transform-origin:0 0;">Активы</span>
<span class="t" style="top:614.50px;font-size:8px;line-height:10px;color:#6e6e6e;left:102.00px;transform:scaleX(0.922);transform-origin:0 0;">История Счета</span>
<span class="t" style="top:614.50px;font-size:8px;line-height:10px;color:#6e6e6e;left:166.00px;transform:scaleX(0.936);transform-origin:0 0;">Новости</span>
<span class="t" style="top:617.50px;font-size:6.2px;line-height:8.2px;color:#ff2020;font-weight:bold;left:195.60px;transform:scaleX(0.914);transform-origin:0 0;">99</span>
<span class="t" style="top:614.50px;font-size:8px;line-height:10px;color:#6e6e6e;left:216.00px;transform:scaleX(0.924);transform-origin:0 0;">Алерты</span>
<span class="t" style="top:614.50px;font-size:8px;line-height:10px;color:#6e6e6e;left:255.00px;transform:scaleX(0.945);transform-origin:0 0;">Почта</span>
<span class="t" style="top:617.50px;font-size:6.2px;line-height:8.2px;color:#ff2020;font-weight:bold;left:276.60px;transform:scaleX(0.914);transform-origin:0 0;">10</span>
<span class="t" style="top:614.50px;font-size:8px;line-height:10px;color:#6e6e6e;left:296.00px;transform:scaleX(1.034);transform-origin:0 0;">Маркет</span>
<span class="t" style="top:617.50px;font-size:6.2px;line-height:8.2px;color:#ff2020;font-weight:bold;left:324.60px;transform:scaleX(0.914);transform-origin:0 0;">86</span>
<span class="t" style="top:614.50px;font-size:8px;line-height:10px;color:#6e6e6e;left:343.00px;transform:scaleX(0.955);transform-origin:0 0;">Сигналы</span>
<span class="t" style="top:614.50px;font-size:8px;line-height:10px;color:#6e6e6e;left:386.00px;transform:scaleX(0.926);transform-origin:0 0;">Статьи</span>
<span class="t" style="top:614.50px;font-size:8px;line-height:10px;color:#6e6e6e;left:422.00px;transform:scaleX(0.966);transform-origin:0 0;">Библиотека</span>
<span class="t" style="top:614.50px;font-size:8px;line-height:10px;color:#6e6e6e;left:476.00px;transform:scaleX(0.950);transform-origin:0 0;">Эксперты</span>
<span class="t" style="top:614.50px;font-size:8px;line-height:10px;color:#6e6e6e;left:522.00px;transform:scaleX(0.959);transform-origin:0 0;">Журнал</span>
<div style="left:96.00px;top:615.50px;width:1.00px;height:9.00px;background:#909090;"></div>
<div style="left:160.00px;top:615.50px;width:1.00px;height:9.00px;background:#909090;"></div>
<div style="left:210.00px;top:615.50px;width:1.00px;height:9.00px;background:#909090;"></div>
<div style="left:249.00px;top:615.50px;width:1.00px;height:9.00px;background:#909090;"></div>
<div style="left:290.00px;top:615.50px;width:1.00px;height:9.00px;background:#909090;"></div>
<div style="left:337.00px;top:615.50px;width:1.00px;height:9.00px;background:#909090;"></div>
<div style="left:380.00px;top:615.50px;width:1.00px;height:9.00px;background:#909090;"></div>
<div style="left:416.00px;top:615.50px;width:1.00px;height:9.00px;background:#909090;"></div>
<div style="left:470.00px;top:615.50px;width:1.00px;height:9.00px;background:#909090;"></div>
<div style="left:516.00px;top:615.50px;width:1.00px;height:9.00px;background:#909090;"></div>
<div style="left:556.00px;top:615.50px;width:1.00px;height:9.00px;background:#909090;"></div>
<svg class="a" style="left:0;top:0" width="1061" height="630" viewBox="0 0 1061 630"><rect x="2.6" y="495.6" width="1057.4" height="130.6" fill="none" stroke="#ff0000" stroke-width="2"/><path d="M115.3 41L56 240L109.6 520" fill="none" stroke="#ff0000" stroke-width="2.1" stroke-linejoin="miter"/><path d="M117.2 36.2L118.6 45.6L112.4 43.8z" fill="#ff0000"/><path d="M111 526L105.2 518.2L112.2 516.8z" fill="#ff0000"/></svg>
</div></body></html>
